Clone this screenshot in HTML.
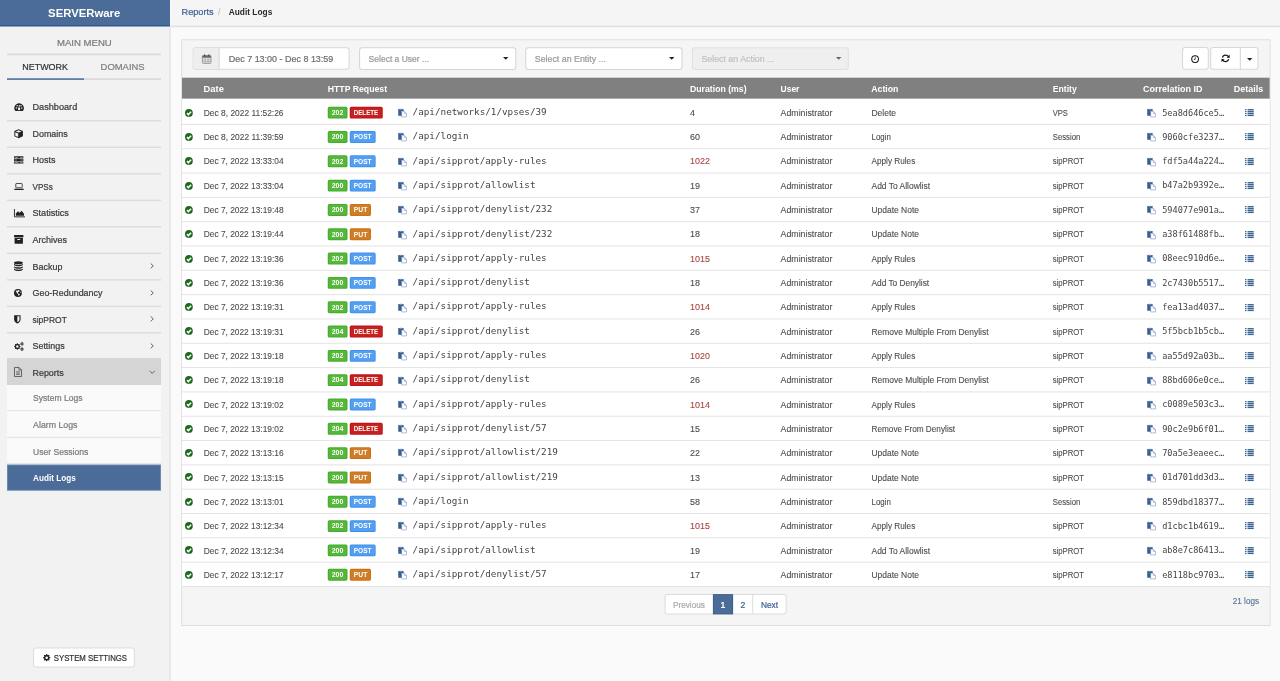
<!DOCTYPE html>
<html lang="en"><head><meta charset="utf-8"><title>SERVERware - Audit Logs</title>
<style>
*{box-sizing:border-box;margin:0;padding:0}
html,body{width:1280px;height:681px;overflow:hidden}
body{background:#fafafa;font-family:"Liberation Sans",sans-serif;position:relative}
.b{position:absolute;display:block;overflow:visible}
#all{position:absolute;left:0;top:0;width:1280px;height:681px;will-change:transform}
.t{position:absolute;display:block;white-space:nowrap;line-height:14px;height:14px;transform-origin:0 50%;-webkit-text-stroke:0.22px currentColor}
.mu,.mk,.bg,.sb,.mb,.br{-webkit-text-stroke:0}
.c{-webkit-text-stroke:0.1px currentColor}
.m{font-size:9.29px}
.mb{font-size:9.29px;font-weight:bold}
.s{font-size:9.29px}
.sb{font-size:9.29px;font-weight:bold}
.c{font-size:8.57px}
.br{font-size:11.8px;font-weight:bold}
.sy{font-size:8.93px}
.bg{font-size:6.6px;font-weight:bold}
.mu{font-family:"DejaVu Sans Mono","Liberation Mono",monospace;font-size:9.29px;color:#444}
.mk{font-family:"DejaVu Sans Mono","Liberation Mono",monospace;font-size:8.57px;color:#444}

</style></head><body><div id="all">
<svg class="b" style="left:0;top:0" width="1280" height="681" viewBox="0 0 1280 681"><rect x="0.00" y="0.00" width="170.00" height="681.00" fill="#f2f2f2"/><rect x="169.40" y="26.30" width="1.40" height="654.70" fill="#e3e3e3"/><rect x="0.00" y="0.00" width="170.00" height="26.30" fill="#4b6c98"/><rect x="0.00" y="25.00" width="170.00" height="1.30" fill="#2c568f"/><rect x="7.00" y="53.50" width="154.00" height="1.80" fill="#dadada"/><rect x="7.00" y="78.20" width="154.00" height="1.80" fill="#dadada"/><rect x="7.00" y="78.20" width="77.00" height="1.80" fill="#5f7fa8"/><rect x="7.00" y="120.11" width="154.00" height="1.40" fill="#dbdbdb"/><rect x="7.00" y="146.62" width="154.00" height="1.40" fill="#dbdbdb"/><rect x="7.00" y="173.13" width="154.00" height="1.40" fill="#dbdbdb"/><rect x="7.00" y="199.64" width="154.00" height="1.40" fill="#dbdbdb"/><rect x="7.00" y="226.15" width="154.00" height="1.40" fill="#dbdbdb"/><rect x="7.00" y="252.66" width="154.00" height="1.40" fill="#dbdbdb"/><rect x="7.00" y="279.17" width="154.00" height="1.40" fill="#dbdbdb"/><rect x="7.00" y="305.68" width="154.00" height="1.40" fill="#dbdbdb"/><rect x="7.00" y="332.19" width="154.00" height="1.40" fill="#dbdbdb"/><rect x="7.00" y="358.70" width="154.00" height="1.40" fill="#dbdbdb"/><rect x="7.00" y="358.20" width="154.00" height="27.00" fill="#d5d5d5"/><rect x="7.00" y="385.00" width="154.00" height="26.40" fill="#fafafa"/><rect x="7.00" y="410.00" width="154.00" height="1.40" fill="#e6e6e6"/><rect x="7.00" y="411.40" width="154.00" height="26.70" fill="#fafafa"/><rect x="7.00" y="436.70" width="154.00" height="1.40" fill="#e6e6e6"/><rect x="7.00" y="438.10" width="154.00" height="26.30" fill="#fafafa"/><rect x="7.00" y="463.00" width="154.00" height="1.40" fill="#e6e6e6"/><path d="M7.00 464.40H161.00A0.00 0.00 0 0 1 161.00 464.40V490.70A0.00 0.00 0 0 1 161.00 490.70H7.00A0.00 0.00 0 0 1 7.00 490.70V464.40A0.00 0.00 0 0 1 7.00 464.40Z" fill="#6c89ae"/><path d="M8.00 465.40H160.00A0.00 0.00 0 0 1 160.00 465.40V489.70A0.00 0.00 0 0 1 160.00 489.70H8.00A0.00 0.00 0 0 1 8.00 489.70V465.40A0.00 0.00 0 0 1 8.00 465.40Z" fill="#4b6c98"/><path d="M35.60 647.50H132.30A2.50 2.50 0 0 1 134.80 650.00V665.00A2.50 2.50 0 0 1 132.30 667.50H35.60A2.50 2.50 0 0 1 33.10 665.00V650.00A2.50 2.50 0 0 1 35.60 647.50Z" fill="#dcdcdc"/><path d="M35.60 648.50H132.30A1.50 1.50 0 0 1 133.80 650.00V665.00A1.50 1.50 0 0 1 132.30 666.50H35.60A1.50 1.50 0 0 1 34.10 665.00V650.00A1.50 1.50 0 0 1 35.60 648.50Z" fill="#fff"/><rect x="171.00" y="0.00" width="1109.00" height="26.70" fill="#f5f5f5"/><rect x="171.00" y="25.70" width="1109.00" height="1.00" fill="#d9d9d9"/><rect x="171.00" y="26.70" width="1109.00" height="1.30" fill="rgba(0,0,0,.02)"/><path d="M181.20 39.20H1270.60A0.00 0.00 0 0 1 1270.60 39.20V625.90A0.00 0.00 0 0 1 1270.60 625.90H181.20A0.00 0.00 0 0 1 181.20 625.90V39.20A0.00 0.00 0 0 1 181.20 39.20Z" fill="#dfdfdf"/><path d="M182.20 40.20H1269.60A0.00 0.00 0 0 1 1269.60 40.20V624.90A0.00 0.00 0 0 1 1269.60 624.90H182.20A0.00 0.00 0 0 1 182.20 624.90V40.20A0.00 0.00 0 0 1 182.20 40.20Z" fill="#f5f5f5"/><path d="M195.70 47.20H346.60A3.00 3.00 0 0 1 349.60 50.20V66.80A3.00 3.00 0 0 1 346.60 69.80H195.70A3.00 3.00 0 0 1 192.70 66.80V50.20A3.00 3.00 0 0 1 195.70 47.20Z" fill="#d8d8d8"/><path d="M195.70 48.20H346.60A2.00 2.00 0 0 1 348.60 50.20V66.80A2.00 2.00 0 0 1 346.60 68.80H195.70A2.00 2.00 0 0 1 193.70 66.80V50.20A2.00 2.00 0 0 1 195.70 48.20Z" fill="#fff"/><path d="M196.00 48.00H219.60A0.00 0.00 0 0 1 219.60 48.00V69.00A0.00 0.00 0 0 1 219.60 69.00H196.00A2.50 2.50 0 0 1 193.50 66.50V50.50A2.50 2.50 0 0 1 196.00 48.00Z" fill="#eee"/><rect x="218.60" y="48.00" width="1.00" height="21.00" fill="#d8d8d8"/><path d="M362.10 47.20H513.30A3.00 3.00 0 0 1 516.30 50.20V66.90A3.00 3.00 0 0 1 513.30 69.90H362.10A3.00 3.00 0 0 1 359.10 66.90V50.20A3.00 3.00 0 0 1 362.10 47.20Z" fill="#d4d4d4"/><path d="M362.10 48.20H513.30A2.00 2.00 0 0 1 515.30 50.20V66.90A2.00 2.00 0 0 1 513.30 68.90H362.10A2.00 2.00 0 0 1 360.10 66.90V50.20A2.00 2.00 0 0 1 362.10 48.20Z" fill="#fff"/><path d="M528.30 47.20H679.50A3.00 3.00 0 0 1 682.50 50.20V66.90A3.00 3.00 0 0 1 679.50 69.90H528.30A3.00 3.00 0 0 1 525.30 66.90V50.20A3.00 3.00 0 0 1 528.30 47.20Z" fill="#d4d4d4"/><path d="M528.30 48.20H679.50A2.00 2.00 0 0 1 681.50 50.20V66.90A2.00 2.00 0 0 1 679.50 68.90H528.30A2.00 2.00 0 0 1 526.30 66.90V50.20A2.00 2.00 0 0 1 528.30 48.20Z" fill="#fff"/><path d="M694.90 47.20H845.80A3.00 3.00 0 0 1 848.80 50.20V66.90A3.00 3.00 0 0 1 845.80 69.90H694.90A3.00 3.00 0 0 1 691.90 66.90V50.20A3.00 3.00 0 0 1 694.90 47.20Z" fill="#dfdfdf"/><path d="M694.90 48.20H845.80A2.00 2.00 0 0 1 847.80 50.20V66.90A2.00 2.00 0 0 1 845.80 68.90H694.90A2.00 2.00 0 0 1 692.90 66.90V50.20A2.00 2.00 0 0 1 694.90 48.20Z" fill="#efefef"/><path d="M1185.10 47.00H1205.80A3.00 3.00 0 0 1 1208.80 50.00V66.70A3.00 3.00 0 0 1 1205.80 69.70H1185.10A3.00 3.00 0 0 1 1182.10 66.70V50.00A3.00 3.00 0 0 1 1185.10 47.00Z" fill="#d8d8d8"/><path d="M1185.10 48.00H1205.80A2.00 2.00 0 0 1 1207.80 50.00V66.70A2.00 2.00 0 0 1 1205.80 68.70H1185.10A2.00 2.00 0 0 1 1183.10 66.70V50.00A2.00 2.00 0 0 1 1185.10 48.00Z" fill="#fff"/><path d="M1213.20 47.00H1240.90A0.00 0.00 0 0 1 1240.90 47.00V69.70A0.00 0.00 0 0 1 1240.90 69.70H1213.20A3.00 3.00 0 0 1 1210.20 66.70V50.00A3.00 3.00 0 0 1 1213.20 47.00Z" fill="#d8d8d8"/><path d="M1213.20 48.00H1239.90A0.00 0.00 0 0 1 1239.90 48.00V68.70A0.00 0.00 0 0 1 1239.90 68.70H1213.20A2.00 2.00 0 0 1 1211.20 66.70V50.00A2.00 2.00 0 0 1 1213.20 48.00Z" fill="#fff"/><path d="M1239.90 47.00H1255.50A3.00 3.00 0 0 1 1258.50 50.00V66.70A3.00 3.00 0 0 1 1255.50 69.70H1239.90A0.00 0.00 0 0 1 1239.90 69.70V47.00A0.00 0.00 0 0 1 1239.90 47.00Z" fill="#d8d8d8"/><path d="M1240.90 48.00H1255.50A2.00 2.00 0 0 1 1257.50 50.00V66.70A2.00 2.00 0 0 1 1255.50 68.70H1240.90A0.00 0.00 0 0 1 1240.90 68.70V48.00A0.00 0.00 0 0 1 1240.90 48.00Z" fill="#fff"/><rect x="182.00" y="77.70" width="1087.60" height="21.10" fill="#808080"/><rect x="182.00" y="98.80" width="1087.60" height="487.50" fill="#fff"/><rect x="182.00" y="123.90" width="1087.60" height="1.00" fill="#e3e3e3"/><path d="M329.35 106.70H345.90A1.60 1.60 0 0 1 347.50 108.30V117.00A1.60 1.60 0 0 1 345.90 118.60H329.35A1.60 1.60 0 0 1 327.75 117.00V108.30A1.60 1.60 0 0 1 329.35 106.70Z" fill="#42ad28"/><path d="M329.35 107.70H345.90A0.60 0.60 0 0 1 346.50 108.30V117.00A0.60 0.60 0 0 1 345.90 117.60H329.35A0.60 0.60 0 0 1 328.75 117.00V108.30A0.60 0.60 0 0 1 329.35 107.70Z" fill="#57b63c"/><path d="M351.35 106.70H381.15A1.60 1.60 0 0 1 382.75 108.30V117.00A1.60 1.60 0 0 1 381.15 118.60H351.35A1.60 1.60 0 0 1 349.75 117.00V108.30A1.60 1.60 0 0 1 351.35 106.70Z" fill="#bf1219"/><path d="M351.35 107.70H381.15A0.60 0.60 0 0 1 381.75 108.30V117.00A0.60 0.60 0 0 1 381.15 117.60H351.35A0.60 0.60 0 0 1 350.75 117.00V108.30A0.60 0.60 0 0 1 351.35 107.70Z" fill="#c5211f"/><rect x="182.00" y="148.22" width="1087.60" height="1.00" fill="#e3e3e3"/><path d="M329.35 131.02H345.90A1.60 1.60 0 0 1 347.50 132.62V141.32A1.60 1.60 0 0 1 345.90 142.92H329.35A1.60 1.60 0 0 1 327.75 141.32V132.62A1.60 1.60 0 0 1 329.35 131.02Z" fill="#42ad28"/><path d="M329.35 132.02H345.90A0.60 0.60 0 0 1 346.50 132.62V141.32A0.60 0.60 0 0 1 345.90 141.92H329.35A0.60 0.60 0 0 1 328.75 141.32V132.62A0.60 0.60 0 0 1 329.35 132.02Z" fill="#57b63c"/><path d="M351.35 131.02H374.05A1.60 1.60 0 0 1 375.65 132.62V141.32A1.60 1.60 0 0 1 374.05 142.92H351.35A1.60 1.60 0 0 1 349.75 141.32V132.62A1.60 1.60 0 0 1 351.35 131.02Z" fill="#3f90ea"/><path d="M351.35 132.02H374.05A0.60 0.60 0 0 1 374.65 132.62V141.32A0.60 0.60 0 0 1 374.05 141.92H351.35A0.60 0.60 0 0 1 350.75 141.32V132.62A0.60 0.60 0 0 1 351.35 132.02Z" fill="#559ff2"/><rect x="182.00" y="172.54" width="1087.60" height="1.00" fill="#e3e3e3"/><path d="M329.35 155.34H345.90A1.60 1.60 0 0 1 347.50 156.94V165.64A1.60 1.60 0 0 1 345.90 167.24H329.35A1.60 1.60 0 0 1 327.75 165.64V156.94A1.60 1.60 0 0 1 329.35 155.34Z" fill="#42ad28"/><path d="M329.35 156.34H345.90A0.60 0.60 0 0 1 346.50 156.94V165.64A0.60 0.60 0 0 1 345.90 166.24H329.35A0.60 0.60 0 0 1 328.75 165.64V156.94A0.60 0.60 0 0 1 329.35 156.34Z" fill="#57b63c"/><path d="M351.35 155.34H374.05A1.60 1.60 0 0 1 375.65 156.94V165.64A1.60 1.60 0 0 1 374.05 167.24H351.35A1.60 1.60 0 0 1 349.75 165.64V156.94A1.60 1.60 0 0 1 351.35 155.34Z" fill="#3f90ea"/><path d="M351.35 156.34H374.05A0.60 0.60 0 0 1 374.65 156.94V165.64A0.60 0.60 0 0 1 374.05 166.24H351.35A0.60 0.60 0 0 1 350.75 165.64V156.94A0.60 0.60 0 0 1 351.35 156.34Z" fill="#559ff2"/><rect x="182.00" y="196.86" width="1087.60" height="1.00" fill="#e3e3e3"/><path d="M329.35 179.66H345.90A1.60 1.60 0 0 1 347.50 181.26V189.96A1.60 1.60 0 0 1 345.90 191.56H329.35A1.60 1.60 0 0 1 327.75 189.96V181.26A1.60 1.60 0 0 1 329.35 179.66Z" fill="#42ad28"/><path d="M329.35 180.66H345.90A0.60 0.60 0 0 1 346.50 181.26V189.96A0.60 0.60 0 0 1 345.90 190.56H329.35A0.60 0.60 0 0 1 328.75 189.96V181.26A0.60 0.60 0 0 1 329.35 180.66Z" fill="#57b63c"/><path d="M351.35 179.66H374.05A1.60 1.60 0 0 1 375.65 181.26V189.96A1.60 1.60 0 0 1 374.05 191.56H351.35A1.60 1.60 0 0 1 349.75 189.96V181.26A1.60 1.60 0 0 1 351.35 179.66Z" fill="#3f90ea"/><path d="M351.35 180.66H374.05A0.60 0.60 0 0 1 374.65 181.26V189.96A0.60 0.60 0 0 1 374.05 190.56H351.35A0.60 0.60 0 0 1 350.75 189.96V181.26A0.60 0.60 0 0 1 351.35 180.66Z" fill="#559ff2"/><rect x="182.00" y="221.18" width="1087.60" height="1.00" fill="#e3e3e3"/><path d="M329.35 203.98H345.90A1.60 1.60 0 0 1 347.50 205.58V214.28A1.60 1.60 0 0 1 345.90 215.88H329.35A1.60 1.60 0 0 1 327.75 214.28V205.58A1.60 1.60 0 0 1 329.35 203.98Z" fill="#42ad28"/><path d="M329.35 204.98H345.90A0.60 0.60 0 0 1 346.50 205.58V214.28A0.60 0.60 0 0 1 345.90 214.88H329.35A0.60 0.60 0 0 1 328.75 214.28V205.58A0.60 0.60 0 0 1 329.35 204.98Z" fill="#57b63c"/><path d="M351.35 203.98H369.40A1.60 1.60 0 0 1 371.00 205.58V214.28A1.60 1.60 0 0 1 369.40 215.88H351.35A1.60 1.60 0 0 1 349.75 214.28V205.58A1.60 1.60 0 0 1 351.35 203.98Z" fill="#c87118"/><path d="M351.35 204.98H369.40A0.60 0.60 0 0 1 370.00 205.58V214.28A0.60 0.60 0 0 1 369.40 214.88H351.35A0.60 0.60 0 0 1 350.75 214.28V205.58A0.60 0.60 0 0 1 351.35 204.98Z" fill="#cf7d26"/><rect x="182.00" y="245.50" width="1087.60" height="1.00" fill="#e3e3e3"/><path d="M329.35 228.30H345.90A1.60 1.60 0 0 1 347.50 229.90V238.60A1.60 1.60 0 0 1 345.90 240.20H329.35A1.60 1.60 0 0 1 327.75 238.60V229.90A1.60 1.60 0 0 1 329.35 228.30Z" fill="#42ad28"/><path d="M329.35 229.30H345.90A0.60 0.60 0 0 1 346.50 229.90V238.60A0.60 0.60 0 0 1 345.90 239.20H329.35A0.60 0.60 0 0 1 328.75 238.60V229.90A0.60 0.60 0 0 1 329.35 229.30Z" fill="#57b63c"/><path d="M351.35 228.30H369.40A1.60 1.60 0 0 1 371.00 229.90V238.60A1.60 1.60 0 0 1 369.40 240.20H351.35A1.60 1.60 0 0 1 349.75 238.60V229.90A1.60 1.60 0 0 1 351.35 228.30Z" fill="#c87118"/><path d="M351.35 229.30H369.40A0.60 0.60 0 0 1 370.00 229.90V238.60A0.60 0.60 0 0 1 369.40 239.20H351.35A0.60 0.60 0 0 1 350.75 238.60V229.90A0.60 0.60 0 0 1 351.35 229.30Z" fill="#cf7d26"/><rect x="182.00" y="269.82" width="1087.60" height="1.00" fill="#e3e3e3"/><path d="M329.35 252.62H345.90A1.60 1.60 0 0 1 347.50 254.22V262.92A1.60 1.60 0 0 1 345.90 264.52H329.35A1.60 1.60 0 0 1 327.75 262.92V254.22A1.60 1.60 0 0 1 329.35 252.62Z" fill="#42ad28"/><path d="M329.35 253.62H345.90A0.60 0.60 0 0 1 346.50 254.22V262.92A0.60 0.60 0 0 1 345.90 263.52H329.35A0.60 0.60 0 0 1 328.75 262.92V254.22A0.60 0.60 0 0 1 329.35 253.62Z" fill="#57b63c"/><path d="M351.35 252.62H374.05A1.60 1.60 0 0 1 375.65 254.22V262.92A1.60 1.60 0 0 1 374.05 264.52H351.35A1.60 1.60 0 0 1 349.75 262.92V254.22A1.60 1.60 0 0 1 351.35 252.62Z" fill="#3f90ea"/><path d="M351.35 253.62H374.05A0.60 0.60 0 0 1 374.65 254.22V262.92A0.60 0.60 0 0 1 374.05 263.52H351.35A0.60 0.60 0 0 1 350.75 262.92V254.22A0.60 0.60 0 0 1 351.35 253.62Z" fill="#559ff2"/><rect x="182.00" y="294.14" width="1087.60" height="1.00" fill="#e3e3e3"/><path d="M329.35 276.94H345.90A1.60 1.60 0 0 1 347.50 278.54V287.24A1.60 1.60 0 0 1 345.90 288.84H329.35A1.60 1.60 0 0 1 327.75 287.24V278.54A1.60 1.60 0 0 1 329.35 276.94Z" fill="#42ad28"/><path d="M329.35 277.94H345.90A0.60 0.60 0 0 1 346.50 278.54V287.24A0.60 0.60 0 0 1 345.90 287.84H329.35A0.60 0.60 0 0 1 328.75 287.24V278.54A0.60 0.60 0 0 1 329.35 277.94Z" fill="#57b63c"/><path d="M351.35 276.94H374.05A1.60 1.60 0 0 1 375.65 278.54V287.24A1.60 1.60 0 0 1 374.05 288.84H351.35A1.60 1.60 0 0 1 349.75 287.24V278.54A1.60 1.60 0 0 1 351.35 276.94Z" fill="#3f90ea"/><path d="M351.35 277.94H374.05A0.60 0.60 0 0 1 374.65 278.54V287.24A0.60 0.60 0 0 1 374.05 287.84H351.35A0.60 0.60 0 0 1 350.75 287.24V278.54A0.60 0.60 0 0 1 351.35 277.94Z" fill="#559ff2"/><rect x="182.00" y="318.46" width="1087.60" height="1.00" fill="#e3e3e3"/><path d="M329.35 301.26H345.90A1.60 1.60 0 0 1 347.50 302.86V311.56A1.60 1.60 0 0 1 345.90 313.16H329.35A1.60 1.60 0 0 1 327.75 311.56V302.86A1.60 1.60 0 0 1 329.35 301.26Z" fill="#42ad28"/><path d="M329.35 302.26H345.90A0.60 0.60 0 0 1 346.50 302.86V311.56A0.60 0.60 0 0 1 345.90 312.16H329.35A0.60 0.60 0 0 1 328.75 311.56V302.86A0.60 0.60 0 0 1 329.35 302.26Z" fill="#57b63c"/><path d="M351.35 301.26H374.05A1.60 1.60 0 0 1 375.65 302.86V311.56A1.60 1.60 0 0 1 374.05 313.16H351.35A1.60 1.60 0 0 1 349.75 311.56V302.86A1.60 1.60 0 0 1 351.35 301.26Z" fill="#3f90ea"/><path d="M351.35 302.26H374.05A0.60 0.60 0 0 1 374.65 302.86V311.56A0.60 0.60 0 0 1 374.05 312.16H351.35A0.60 0.60 0 0 1 350.75 311.56V302.86A0.60 0.60 0 0 1 351.35 302.26Z" fill="#559ff2"/><rect x="182.00" y="342.78" width="1087.60" height="1.00" fill="#e3e3e3"/><path d="M329.35 325.58H345.90A1.60 1.60 0 0 1 347.50 327.18V335.88A1.60 1.60 0 0 1 345.90 337.48H329.35A1.60 1.60 0 0 1 327.75 335.88V327.18A1.60 1.60 0 0 1 329.35 325.58Z" fill="#42ad28"/><path d="M329.35 326.58H345.90A0.60 0.60 0 0 1 346.50 327.18V335.88A0.60 0.60 0 0 1 345.90 336.48H329.35A0.60 0.60 0 0 1 328.75 335.88V327.18A0.60 0.60 0 0 1 329.35 326.58Z" fill="#57b63c"/><path d="M351.35 325.58H381.15A1.60 1.60 0 0 1 382.75 327.18V335.88A1.60 1.60 0 0 1 381.15 337.48H351.35A1.60 1.60 0 0 1 349.75 335.88V327.18A1.60 1.60 0 0 1 351.35 325.58Z" fill="#bf1219"/><path d="M351.35 326.58H381.15A0.60 0.60 0 0 1 381.75 327.18V335.88A0.60 0.60 0 0 1 381.15 336.48H351.35A0.60 0.60 0 0 1 350.75 335.88V327.18A0.60 0.60 0 0 1 351.35 326.58Z" fill="#c5211f"/><rect x="182.00" y="367.10" width="1087.60" height="1.00" fill="#e3e3e3"/><path d="M329.35 349.90H345.90A1.60 1.60 0 0 1 347.50 351.50V360.20A1.60 1.60 0 0 1 345.90 361.80H329.35A1.60 1.60 0 0 1 327.75 360.20V351.50A1.60 1.60 0 0 1 329.35 349.90Z" fill="#42ad28"/><path d="M329.35 350.90H345.90A0.60 0.60 0 0 1 346.50 351.50V360.20A0.60 0.60 0 0 1 345.90 360.80H329.35A0.60 0.60 0 0 1 328.75 360.20V351.50A0.60 0.60 0 0 1 329.35 350.90Z" fill="#57b63c"/><path d="M351.35 349.90H374.05A1.60 1.60 0 0 1 375.65 351.50V360.20A1.60 1.60 0 0 1 374.05 361.80H351.35A1.60 1.60 0 0 1 349.75 360.20V351.50A1.60 1.60 0 0 1 351.35 349.90Z" fill="#3f90ea"/><path d="M351.35 350.90H374.05A0.60 0.60 0 0 1 374.65 351.50V360.20A0.60 0.60 0 0 1 374.05 360.80H351.35A0.60 0.60 0 0 1 350.75 360.20V351.50A0.60 0.60 0 0 1 351.35 350.90Z" fill="#559ff2"/><rect x="182.00" y="391.42" width="1087.60" height="1.00" fill="#e3e3e3"/><path d="M329.35 374.22H345.90A1.60 1.60 0 0 1 347.50 375.82V384.52A1.60 1.60 0 0 1 345.90 386.12H329.35A1.60 1.60 0 0 1 327.75 384.52V375.82A1.60 1.60 0 0 1 329.35 374.22Z" fill="#42ad28"/><path d="M329.35 375.22H345.90A0.60 0.60 0 0 1 346.50 375.82V384.52A0.60 0.60 0 0 1 345.90 385.12H329.35A0.60 0.60 0 0 1 328.75 384.52V375.82A0.60 0.60 0 0 1 329.35 375.22Z" fill="#57b63c"/><path d="M351.35 374.22H381.15A1.60 1.60 0 0 1 382.75 375.82V384.52A1.60 1.60 0 0 1 381.15 386.12H351.35A1.60 1.60 0 0 1 349.75 384.52V375.82A1.60 1.60 0 0 1 351.35 374.22Z" fill="#bf1219"/><path d="M351.35 375.22H381.15A0.60 0.60 0 0 1 381.75 375.82V384.52A0.60 0.60 0 0 1 381.15 385.12H351.35A0.60 0.60 0 0 1 350.75 384.52V375.82A0.60 0.60 0 0 1 351.35 375.22Z" fill="#c5211f"/><rect x="182.00" y="415.74" width="1087.60" height="1.00" fill="#e3e3e3"/><path d="M329.35 398.54H345.90A1.60 1.60 0 0 1 347.50 400.14V408.84A1.60 1.60 0 0 1 345.90 410.44H329.35A1.60 1.60 0 0 1 327.75 408.84V400.14A1.60 1.60 0 0 1 329.35 398.54Z" fill="#42ad28"/><path d="M329.35 399.54H345.90A0.60 0.60 0 0 1 346.50 400.14V408.84A0.60 0.60 0 0 1 345.90 409.44H329.35A0.60 0.60 0 0 1 328.75 408.84V400.14A0.60 0.60 0 0 1 329.35 399.54Z" fill="#57b63c"/><path d="M351.35 398.54H374.05A1.60 1.60 0 0 1 375.65 400.14V408.84A1.60 1.60 0 0 1 374.05 410.44H351.35A1.60 1.60 0 0 1 349.75 408.84V400.14A1.60 1.60 0 0 1 351.35 398.54Z" fill="#3f90ea"/><path d="M351.35 399.54H374.05A0.60 0.60 0 0 1 374.65 400.14V408.84A0.60 0.60 0 0 1 374.05 409.44H351.35A0.60 0.60 0 0 1 350.75 408.84V400.14A0.60 0.60 0 0 1 351.35 399.54Z" fill="#559ff2"/><rect x="182.00" y="440.06" width="1087.60" height="1.00" fill="#e3e3e3"/><path d="M329.35 422.86H345.90A1.60 1.60 0 0 1 347.50 424.46V433.16A1.60 1.60 0 0 1 345.90 434.76H329.35A1.60 1.60 0 0 1 327.75 433.16V424.46A1.60 1.60 0 0 1 329.35 422.86Z" fill="#42ad28"/><path d="M329.35 423.86H345.90A0.60 0.60 0 0 1 346.50 424.46V433.16A0.60 0.60 0 0 1 345.90 433.76H329.35A0.60 0.60 0 0 1 328.75 433.16V424.46A0.60 0.60 0 0 1 329.35 423.86Z" fill="#57b63c"/><path d="M351.35 422.86H381.15A1.60 1.60 0 0 1 382.75 424.46V433.16A1.60 1.60 0 0 1 381.15 434.76H351.35A1.60 1.60 0 0 1 349.75 433.16V424.46A1.60 1.60 0 0 1 351.35 422.86Z" fill="#bf1219"/><path d="M351.35 423.86H381.15A0.60 0.60 0 0 1 381.75 424.46V433.16A0.60 0.60 0 0 1 381.15 433.76H351.35A0.60 0.60 0 0 1 350.75 433.16V424.46A0.60 0.60 0 0 1 351.35 423.86Z" fill="#c5211f"/><rect x="182.00" y="464.38" width="1087.60" height="1.00" fill="#e3e3e3"/><path d="M329.35 447.18H345.90A1.60 1.60 0 0 1 347.50 448.78V457.48A1.60 1.60 0 0 1 345.90 459.08H329.35A1.60 1.60 0 0 1 327.75 457.48V448.78A1.60 1.60 0 0 1 329.35 447.18Z" fill="#42ad28"/><path d="M329.35 448.18H345.90A0.60 0.60 0 0 1 346.50 448.78V457.48A0.60 0.60 0 0 1 345.90 458.08H329.35A0.60 0.60 0 0 1 328.75 457.48V448.78A0.60 0.60 0 0 1 329.35 448.18Z" fill="#57b63c"/><path d="M351.35 447.18H369.40A1.60 1.60 0 0 1 371.00 448.78V457.48A1.60 1.60 0 0 1 369.40 459.08H351.35A1.60 1.60 0 0 1 349.75 457.48V448.78A1.60 1.60 0 0 1 351.35 447.18Z" fill="#c87118"/><path d="M351.35 448.18H369.40A0.60 0.60 0 0 1 370.00 448.78V457.48A0.60 0.60 0 0 1 369.40 458.08H351.35A0.60 0.60 0 0 1 350.75 457.48V448.78A0.60 0.60 0 0 1 351.35 448.18Z" fill="#cf7d26"/><rect x="182.00" y="488.70" width="1087.60" height="1.00" fill="#e3e3e3"/><path d="M329.35 471.50H345.90A1.60 1.60 0 0 1 347.50 473.10V481.80A1.60 1.60 0 0 1 345.90 483.40H329.35A1.60 1.60 0 0 1 327.75 481.80V473.10A1.60 1.60 0 0 1 329.35 471.50Z" fill="#42ad28"/><path d="M329.35 472.50H345.90A0.60 0.60 0 0 1 346.50 473.10V481.80A0.60 0.60 0 0 1 345.90 482.40H329.35A0.60 0.60 0 0 1 328.75 481.80V473.10A0.60 0.60 0 0 1 329.35 472.50Z" fill="#57b63c"/><path d="M351.35 471.50H369.40A1.60 1.60 0 0 1 371.00 473.10V481.80A1.60 1.60 0 0 1 369.40 483.40H351.35A1.60 1.60 0 0 1 349.75 481.80V473.10A1.60 1.60 0 0 1 351.35 471.50Z" fill="#c87118"/><path d="M351.35 472.50H369.40A0.60 0.60 0 0 1 370.00 473.10V481.80A0.60 0.60 0 0 1 369.40 482.40H351.35A0.60 0.60 0 0 1 350.75 481.80V473.10A0.60 0.60 0 0 1 351.35 472.50Z" fill="#cf7d26"/><rect x="182.00" y="513.02" width="1087.60" height="1.00" fill="#e3e3e3"/><path d="M329.35 495.82H345.90A1.60 1.60 0 0 1 347.50 497.42V506.12A1.60 1.60 0 0 1 345.90 507.72H329.35A1.60 1.60 0 0 1 327.75 506.12V497.42A1.60 1.60 0 0 1 329.35 495.82Z" fill="#42ad28"/><path d="M329.35 496.82H345.90A0.60 0.60 0 0 1 346.50 497.42V506.12A0.60 0.60 0 0 1 345.90 506.72H329.35A0.60 0.60 0 0 1 328.75 506.12V497.42A0.60 0.60 0 0 1 329.35 496.82Z" fill="#57b63c"/><path d="M351.35 495.82H374.05A1.60 1.60 0 0 1 375.65 497.42V506.12A1.60 1.60 0 0 1 374.05 507.72H351.35A1.60 1.60 0 0 1 349.75 506.12V497.42A1.60 1.60 0 0 1 351.35 495.82Z" fill="#3f90ea"/><path d="M351.35 496.82H374.05A0.60 0.60 0 0 1 374.65 497.42V506.12A0.60 0.60 0 0 1 374.05 506.72H351.35A0.60 0.60 0 0 1 350.75 506.12V497.42A0.60 0.60 0 0 1 351.35 496.82Z" fill="#559ff2"/><rect x="182.00" y="537.34" width="1087.60" height="1.00" fill="#e3e3e3"/><path d="M329.35 520.14H345.90A1.60 1.60 0 0 1 347.50 521.74V530.44A1.60 1.60 0 0 1 345.90 532.04H329.35A1.60 1.60 0 0 1 327.75 530.44V521.74A1.60 1.60 0 0 1 329.35 520.14Z" fill="#42ad28"/><path d="M329.35 521.14H345.90A0.60 0.60 0 0 1 346.50 521.74V530.44A0.60 0.60 0 0 1 345.90 531.04H329.35A0.60 0.60 0 0 1 328.75 530.44V521.74A0.60 0.60 0 0 1 329.35 521.14Z" fill="#57b63c"/><path d="M351.35 520.14H374.05A1.60 1.60 0 0 1 375.65 521.74V530.44A1.60 1.60 0 0 1 374.05 532.04H351.35A1.60 1.60 0 0 1 349.75 530.44V521.74A1.60 1.60 0 0 1 351.35 520.14Z" fill="#3f90ea"/><path d="M351.35 521.14H374.05A0.60 0.60 0 0 1 374.65 521.74V530.44A0.60 0.60 0 0 1 374.05 531.04H351.35A0.60 0.60 0 0 1 350.75 530.44V521.74A0.60 0.60 0 0 1 351.35 521.14Z" fill="#559ff2"/><rect x="182.00" y="561.66" width="1087.60" height="1.00" fill="#e3e3e3"/><path d="M329.35 544.46H345.90A1.60 1.60 0 0 1 347.50 546.06V554.76A1.60 1.60 0 0 1 345.90 556.36H329.35A1.60 1.60 0 0 1 327.75 554.76V546.06A1.60 1.60 0 0 1 329.35 544.46Z" fill="#42ad28"/><path d="M329.35 545.46H345.90A0.60 0.60 0 0 1 346.50 546.06V554.76A0.60 0.60 0 0 1 345.90 555.36H329.35A0.60 0.60 0 0 1 328.75 554.76V546.06A0.60 0.60 0 0 1 329.35 545.46Z" fill="#57b63c"/><path d="M351.35 544.46H374.05A1.60 1.60 0 0 1 375.65 546.06V554.76A1.60 1.60 0 0 1 374.05 556.36H351.35A1.60 1.60 0 0 1 349.75 554.76V546.06A1.60 1.60 0 0 1 351.35 544.46Z" fill="#3f90ea"/><path d="M351.35 545.46H374.05A0.60 0.60 0 0 1 374.65 546.06V554.76A0.60 0.60 0 0 1 374.05 555.36H351.35A0.60 0.60 0 0 1 350.75 554.76V546.06A0.60 0.60 0 0 1 351.35 545.46Z" fill="#559ff2"/><rect x="182.00" y="585.98" width="1087.60" height="1.00" fill="#e3e3e3"/><path d="M329.35 568.78H345.90A1.60 1.60 0 0 1 347.50 570.38V579.08A1.60 1.60 0 0 1 345.90 580.68H329.35A1.60 1.60 0 0 1 327.75 579.08V570.38A1.60 1.60 0 0 1 329.35 568.78Z" fill="#42ad28"/><path d="M329.35 569.78H345.90A0.60 0.60 0 0 1 346.50 570.38V579.08A0.60 0.60 0 0 1 345.90 579.68H329.35A0.60 0.60 0 0 1 328.75 579.08V570.38A0.60 0.60 0 0 1 329.35 569.78Z" fill="#57b63c"/><path d="M351.35 568.78H369.40A1.60 1.60 0 0 1 371.00 570.38V579.08A1.60 1.60 0 0 1 369.40 580.68H351.35A1.60 1.60 0 0 1 349.75 579.08V570.38A1.60 1.60 0 0 1 351.35 568.78Z" fill="#c87118"/><path d="M351.35 569.78H369.40A0.60 0.60 0 0 1 370.00 570.38V579.08A0.60 0.60 0 0 1 369.40 579.68H351.35A0.60 0.60 0 0 1 350.75 579.08V570.38A0.60 0.60 0 0 1 351.35 569.78Z" fill="#cf7d26"/><path d="M667.60 594.10H783.60A3.00 3.00 0 0 1 786.60 597.10V611.40A3.00 3.00 0 0 1 783.60 614.40H667.60A3.00 3.00 0 0 1 664.60 611.40V597.10A3.00 3.00 0 0 1 667.60 594.10Z" fill="#dcdcdc"/><path d="M667.60 595.10H783.60A2.00 2.00 0 0 1 785.60 597.10V611.40A2.00 2.00 0 0 1 783.60 613.40H667.60A2.00 2.00 0 0 1 665.60 611.40V597.10A2.00 2.00 0 0 1 667.60 595.10Z" fill="#fff"/><path d="M712.90 594.10H733.10A0.00 0.00 0 0 1 733.10 594.10V614.40A0.00 0.00 0 0 1 733.10 614.40H712.90A0.00 0.00 0 0 1 712.90 614.40V594.10A0.00 0.00 0 0 1 712.90 594.10Z" fill="#3f5f8a"/><path d="M713.90 595.10H732.10A0.00 0.00 0 0 1 732.10 595.10V613.40A0.00 0.00 0 0 1 732.10 613.40H713.90A0.00 0.00 0 0 1 713.90 613.40V595.10A0.00 0.00 0 0 1 713.90 595.10Z" fill="#4b6c98"/><rect x="752.20" y="595.00" width="1.00" height="18.50" fill="#dcdcdc"/></svg>



<span class="t br" style="left:48px;top:4px;line-height:16px;height:16px;transform:translate(0.10px,0.76px) scaleX(0.9587);color:#fff;">SERVERware</span>
<span class="t s" style="left:56px;top:36px;line-height:12px;height:12px;transform:translate(0.90px,0.85px) scaleX(1.0323);color:#7c7c7c;">MAIN MENU</span>

<span class="t s" style="left:22px;top:61px;line-height:12px;height:12px;transform:translate(0.25px,0.10px) scaleX(0.9638);color:#333;">NETWORK</span>
<span class="t s" style="left:100px;top:61px;line-height:12px;height:12px;transform:translate(0.60px,0.10px) scaleX(1.0157);color:#808080;">DOMAINS</span>



<svg class="b" style="left:13.90px;top:103.35px;" width="10.20" height="8.50" viewBox="0 0 18 15"><path d="M9 0.5a8.5 8.500 0 0 0-7.400 12.700c.3.600.8.800 1.400.800h12c.600 0 1.100-.2 1.400-.8A8.500 8.500 0 0 0 9 0.500z" fill="#222"/><circle cx="4.200" cy="9" r="1.300" fill="#f2f2f2"/><circle cx="5.600" cy="5" r="1.300" fill="#f2f2f2"/><circle cx="13.800" cy="9" r="1.300" fill="#f2f2f2"/><circle cx="12.400" cy="5" r="1.300" fill="#f2f2f2"/><path d="M9.700 3.500L8.600 9" stroke="#f2f2f2" stroke-width="1.500"/><circle cx="9" cy="10.500" r="2.100" fill="#f2f2f2"/></svg>
<span class="t m" style="left:32px;top:101px;line-height:12px;height:12px;transform:translate(0.50px,0.45px) scaleX(0.9858);color:#3a3a3a;">Dashboard</span>

<svg class="b" style="left:14.30px;top:129.01px;" width="9.30" height="9.50" viewBox="0 0 16 16.4"><path d="M8 0.400L15.400 3.400v9.200L8 16 0.600 12.600V3.400z" fill="#222"/><path d="M8 2.200L12.800 4.200 8 6.200 3.200 4.200z" fill="#f2f2f2"/><path d="M2.200 5.600L7.200 7.800v6.200L2.200 11.700z" fill="#f2f2f2"/></svg>
<span class="t m" style="left:32px;top:127px;line-height:12px;height:12px;transform:translate(0.50px,0.96px) scaleX(0.9599);color:#3a3a3a;">Domains</span>

<svg class="b" style="left:14.30px;top:156.37px;" width="9.40" height="7.80" viewBox="0 0 18 15"><rect x="0" y="0.6" width="18" height="4" rx="0.600" fill="#222"/><rect x="1.600" y="1.9" width="6" height="1.400" fill="#b5b5b5"/><rect x="12" y="1.9" width="4.500" height="1.400" fill="#b5b5b5"/><rect x="0" y="5.6" width="18" height="4" rx="0.600" fill="#222"/><rect x="1.600" y="6.9" width="4" height="1.400" fill="#b5b5b5"/><rect x="12" y="6.9" width="4.500" height="1.400" fill="#b5b5b5"/><rect x="0" y="10.6" width="18" height="4" rx="0.600" fill="#222"/><rect x="1.600" y="11.9" width="7" height="1.400" fill="#b5b5b5"/><rect x="12" y="11.9" width="4.500" height="1.400" fill="#b5b5b5"/></svg>
<span class="t m" style="left:32px;top:154px;line-height:12px;height:12px;transform:translate(0.50px,0.47px) scaleX(0.9675);color:#3a3a3a;">Hosts</span>

<svg class="b" style="left:14.00px;top:183.18px;" width="10.00" height="7.40" viewBox="0 0 20 14.800"><rect x="3.600" y="1" width="12.800" height="8.600" rx="1" fill="none" stroke="#222" stroke-width="1.600"/><path d="M0 11.400h20v0.800c0 1-.8 1.600-1.600 1.600H1.600C.800 13.800 0 13.200 0 12.200z" fill="#222"/></svg>
<span class="t m" style="left:32px;top:180px;line-height:12px;height:12px;transform:translate(0.50px,0.98px) scaleX(0.8697);color:#3a3a3a;">VPSs</span>

<svg class="b" style="left:13.90px;top:208.99px;" width="11.00" height="8.40" viewBox="0 0 20.400 15.600"><path d="M0.800 0v14.600h19.600" fill="none" stroke="#222" stroke-width="1.700"/><path d="M3.400 12.600V8.200L7.400 4.200 10.600 7 14 3.400 18.600 9v3.600z" fill="#222"/></svg>
<span class="t m" style="left:32px;top:207px;line-height:12px;height:12px;transform:translate(0.50px,0.49px) scaleX(0.9788);color:#3a3a3a;">Statistics</span>

<svg class="b" style="left:14.00px;top:235.30px;" width="9.50" height="8.70" viewBox="0 0 16.400 15.200"><rect x="0" y="0" width="16.400" height="4" rx="0.500" fill="#222"/><path d="M0.900 5h14.600v9.400c0 .5-.3.800-.8.800H1.700c-.5 0-.8-.3-.8-.8z" fill="#222"/><rect x="5.600" y="6.800" width="5.200" height="1.800" rx="0.900" fill="#f2f2f2"/></svg>
<span class="t m" style="left:32px;top:233px;line-height:12px;height:12px;transform:translate(0.50px,1.00px) scaleX(0.9681);color:#3a3a3a;">Archives</span>

<svg class="b" style="left:14.00px;top:260.91px;" width="8.80" height="10.60" viewBox="0 0 16 18.400"><ellipse cx="8" cy="2.800" rx="8" ry="2.800" fill="#222"/><path d="M0 4.6c1.400 1.500 4.500 2.100 8 2.100s6.600-.6 8-2.100v2.400c-1.400 1.600-4.500 2.200-8 2.200s-6.600-.6-8-2.200z" fill="#222"/><path d="M0 8.9c1.400 1.500 4.500 2.100 8 2.100s6.600-.6 8-2.100v2.400c-1.400 1.600-4.500 2.200-8 2.200s-6.600-.6-8-2.200z" fill="#222"/><path d="M0 13.2c1.400 1.500 4.500 2.100 8 2.100s6.600-.6 8-2.100v2.400c-1.400 1.600-4.500 2.200-8 2.200s-6.600-.6-8-2.200z" fill="#222"/></svg>
<span class="t m" style="left:32px;top:260px;line-height:12px;height:12px;transform:translate(0.50px,0.51px) scaleX(0.9644);color:#3a3a3a;">Backup</span>
<svg class="b" style="left:150.20px;top:263.41px;" width="4.20" height="5.80" viewBox="0 0 4.2 5.8"><path d="M0.7 0.5L3.3 2.9 0.7 5.3" fill="none" stroke="#555" stroke-width="0.9"/></svg>

<svg class="b" style="left:14.45px;top:288.92px;" width="7.90" height="7.90" viewBox="0 0 16 16"><circle cx="8" cy="8" r="8" fill="#222"/><path d="M4.400 2.800l2.800.8 1.600-1.400 2.600.8-.4 2.200-2.400.8-1 2 1.600 1.600 2.800.4-1.400 3.400-2-.4-.6-2.800-2.200-1.600-.800-2.800-1.800-.6z" fill="#f2f2f2"/><path d="M12.600 4.600l2 1.800.2 2.400-1.600-1.400z" fill="#f2f2f2"/></svg>
<span class="t m" style="left:32px;top:287px;line-height:12px;height:12px;transform:translate(0.50px,0.02px) scaleX(0.9616);color:#3a3a3a;">Geo-Redundancy</span>
<svg class="b" style="left:150.20px;top:289.92px;" width="4.20" height="5.80" viewBox="0 0 4.2 5.8"><path d="M0.7 0.5L3.3 2.9 0.7 5.3" fill="none" stroke="#555" stroke-width="0.9"/></svg>

<svg class="b" style="left:14.40px;top:315.13px;" width="6.70" height="8.80" viewBox="0 0 12.400 16.400"><path d="M0.200 0.400h12v8c0 4-3.400 6.400-6 7.600-2.600-1.200-6-3.600-6-7.600z" fill="#222"/><path d="M6.200 2.400h4v5.800c0 2.400-2 4.200-4 5.400z" fill="#f2f2f2"/></svg>
<span class="t m" style="left:32px;top:313px;line-height:12px;height:12px;transform:translate(0.50px,0.53px) scaleX(0.9111);color:#3a3a3a;">sipPROT</span>
<svg class="b" style="left:150.20px;top:316.43px;" width="4.20" height="5.80" viewBox="0 0 4.2 5.8"><path d="M0.7 0.5L3.3 2.9 0.7 5.3" fill="none" stroke="#555" stroke-width="0.9"/></svg>

<svg class="b" style="left:14.00px;top:341.54px;" width="10.20" height="9.00" viewBox="0 0 19.600 17.200"><path d="M12.57 7.99L12.57 9.21L10.99 9.99L10.63 10.86L11.19 12.53L10.33 13.39L8.66 12.83L7.79 13.19L7.01 14.77L5.79 14.77L5.01 13.19L4.14 12.83L2.47 13.39L1.61 12.53L2.17 10.86L1.81 9.99L0.23 9.21L0.23 7.99L1.81 7.21L2.17 6.34L1.61 4.67L2.47 3.81L4.14 4.37L5.01 4.01L5.79 2.43L7.01 2.43L7.79 4.01L8.66 4.37L10.33 3.81L11.19 4.67L10.63 6.34L10.99 7.21z" fill="#222"/><circle cx="6.40" cy="8.60" r="2.30" fill="#f2f2f2"/><path d="M18.87 3.14L18.87 4.06L17.80 4.59L17.46 5.18L17.53 6.38L16.74 6.83L15.74 6.18L15.06 6.18L14.06 6.83L13.27 6.38L13.34 5.18L13.00 4.59L11.93 4.06L11.93 3.14L13.00 2.61L13.34 2.02L13.27 0.82L14.06 0.37L15.06 1.02L15.74 1.02L16.74 0.37L17.53 0.82L17.46 2.02L17.80 2.61z" fill="#222"/><circle cx="15.40" cy="3.60" r="1.20" fill="#f2f2f2"/><path d="M18.87 13.14L18.87 14.06L17.80 14.59L17.46 15.18L17.53 16.38L16.74 16.83L15.74 16.18L15.06 16.18L14.06 16.83L13.27 16.38L13.34 15.18L13.00 14.59L11.93 14.06L11.93 13.14L13.00 12.61L13.34 12.02L13.27 10.82L14.06 10.37L15.06 11.02L15.74 11.02L16.74 10.37L17.53 10.82L17.46 12.02L17.80 12.61z" fill="#222"/><circle cx="15.40" cy="13.60" r="1.20" fill="#f2f2f2"/></svg>
<span class="t m" style="left:32px;top:340px;line-height:12px;height:12px;transform:translate(0.50px,0.04px) scaleX(0.9588);color:#3a3a3a;">Settings</span>
<svg class="b" style="left:150.20px;top:342.94px;" width="4.20" height="5.80" viewBox="0 0 4.2 5.8"><path d="M0.7 0.5L3.3 2.9 0.7 5.3" fill="none" stroke="#555" stroke-width="0.9"/></svg>

<svg class="b" style="left:14.30px;top:367.35px;" width="8.00" height="10.00" viewBox="0 0 14 17.600"><path d="M0.800 0.800h8l4.400 4.400v11.600H0.800z" fill="none" stroke="#444" stroke-width="1.400"/><path d="M8.600 1v4.400h4.400" fill="none" stroke="#444" stroke-width="1.200"/><path d="M3.600 8.400h6.800M3.600 10.800h6.800M3.600 13.200h6.800" stroke="#444" stroke-width="1.100"/></svg>
<span class="t m" style="left:32px;top:366px;line-height:12px;height:12px;transform:translate(0.50px,0.55px) scaleX(0.9617);color:#3a3a3a;">Reports</span>
<svg class="b" style="left:149.00px;top:370.15px;" width="6.40" height="4.40" viewBox="0 0 6.4 4.4"><path d="M0.6 0.8L3.2 3.4 5.8 0.8" fill="none" stroke="#555" stroke-width="0.9"/></svg>

<span class="t m" style="left:33px;top:392px;line-height:12px;height:12px;transform:translate(0.10px,0.40px) scaleX(0.9221);color:#7a7a7a;">System Logs</span>

<span class="t m" style="left:33px;top:418px;line-height:12px;height:12px;transform:translate(0.10px,0.80px) scaleX(0.9450);color:#7a7a7a;">Alarm Logs</span>

<span class="t m" style="left:33px;top:445px;line-height:12px;height:12px;transform:translate(0.10px,0.60px) scaleX(0.9204);color:#7a7a7a;">User Sessions</span>

<span class="t mb" style="left:33px;top:472px;line-height:12px;height:12px;transform:translate(0.10px,0.30px) scaleX(0.8800);color:#fff;">Audit Logs</span>

<svg class="b" style="left:42.55px;top:654.10px;" width="7.40" height="7.40" viewBox="0 0 16 16"><path d="M15.96 7.22L15.96 8.78L13.74 9.74L13.29 10.83L14.18 13.08L13.08 14.18L10.83 13.29L9.74 13.74L8.78 15.96L7.22 15.96L6.26 13.74L5.17 13.29L2.92 14.18L1.82 13.08L2.71 10.83L2.26 9.74L0.04 8.78L0.04 7.22L2.26 6.26L2.71 5.17L1.82 2.92L2.92 1.82L5.17 2.71L6.26 2.26L7.22 0.04L8.78 0.04L9.74 2.26L10.83 2.71L13.08 1.82L14.18 2.92L13.29 5.17L13.74 6.26z" fill="#222"/><circle cx="8" cy="8" r="2.800" fill="#fff"/></svg>
<span class="t sy" style="left:53px;top:651px;line-height:12px;height:12px;transform:translate(0.75px,0.87px) scaleX(0.8750);color:#333;">SYSTEM SETTINGS</span>


<span class="t s" style="left:181px;top:6px;line-height:12px;height:12px;transform:translate(0.50px,0.20px) scaleX(0.9891);color:#3d6294;">Reports</span>
<span class="t s" style="left:218px;top:6px;line-height:12px;height:12px;transform:translate(0.00px,0.20px) scaleX(0.9300);color:#c4c4c4;">/</span>
<span class="t sb" style="left:228px;top:6px;line-height:12px;height:12px;transform:translate(0.75px,0.20px) scaleX(0.8986);color:#2a2a2a;">Audit Logs</span>



<svg class="b" style="left:201.55px;top:54.00px;" width="9.40" height="9.80" viewBox="0 0 18.800 19.600"><rect x="0.800" y="3" width="17.200" height="15.800" rx="1.600" fill="#e4e4e4" stroke="#777" stroke-width="1.300"/><path d="M0.800 4.600c0-1 .6-1.600 1.600-1.600h14c1 0 1.600.6 1.600 1.600v3H0.800z" fill="#6a6a6a"/><path d="M1 11.600h17M1 15.200h17M6.400 8v10.600M12.200 8v10.600" stroke="#8c8c8c" stroke-width="0.900"/><rect x="4" y="0.400" width="2.400" height="4.800" rx="1.200" fill="#555"/><rect x="12.400" y="0.400" width="2.400" height="4.800" rx="1.200" fill="#555"/></svg>
<span class="t s" style="left:228px;top:52px;line-height:12px;height:12px;transform:translate(0.75px,0.80px) scaleX(0.9650);color:#6e6e6e;">Dec 7 13:00 - Dec 8 13:59</span>

<span class="t s" style="left:368px;top:52px;line-height:12px;height:12px;transform:translate(0.60px,0.80px) scaleX(0.9168);color:#999;">Select a User ...</span>
<svg class="b" style="left:503.20px;top:57.45px;" width="5.40" height="2.80" viewBox="0 0 5.4 2.8"><path d="M0 0h5.4L2.7 2.8z" fill="#222"/></svg>

<span class="t s" style="left:534px;top:52px;line-height:12px;height:12px;transform:translate(0.80px,0.80px) scaleX(0.9498);color:#999;">Select an Entity ...</span>
<svg class="b" style="left:669.40px;top:57.45px;" width="5.40" height="2.80" viewBox="0 0 5.4 2.8"><path d="M0 0h5.4L2.7 2.8z" fill="#222"/></svg>

<span class="t s" style="left:701px;top:52px;line-height:12px;height:12px;transform:translate(0.40px,0.80px) scaleX(0.9504);color:#c2c2c2;">Select an Action ...</span>
<svg class="b" style="left:835.70px;top:57.45px;" width="5.40" height="2.80" viewBox="0 0 5.4 2.8"><path d="M0 0h5.4L2.7 2.8z" fill="#666"/></svg>

<svg class="b" style="left:1191.20px;top:54.65px;" width="8.20" height="8.20" viewBox="0 0 16 16"><circle cx="8" cy="8" r="6.600" fill="none" stroke="#111" stroke-width="2"/><path d="M8.600 4.400L8 8.600 5.600 9" fill="none" stroke="#111" stroke-width="1.500"/></svg>

<svg class="b" style="left:1220.90px;top:54.35px;" width="9.20" height="8.80" viewBox="0 0 18.400 17.600"><g transform="translate(18.4,0) scale(-1,1)"><path d="M15.600 7A7 7 0 0 0 3.400 5.200" fill="none" stroke="#111" stroke-width="2.500"/><path d="M2.800 10.600A7 7 0 0 0 15 12.400" fill="none" stroke="#111" stroke-width="2.500"/><path d="M0.800 1.600L1.200 8l6-1.200z" fill="#111"/><path d="M17.600 16L17.200 9.600l-6 1.200z" fill="#111"/></g></svg>

<svg class="b" style="left:1246.90px;top:57.80px;" width="5.40" height="2.80" viewBox="0 0 5.4 2.8"><path d="M0 0h5.4L2.7 2.8z" fill="#222"/></svg>


<span class="t sb" style="left:203px;top:82px;line-height:12px;height:12px;transform:translate(0.60px,0.85px) scaleX(1.0073);color:#fff;">Date</span>
<span class="t sb" style="left:327px;top:82px;line-height:12px;height:12px;transform:translate(0.75px,0.85px) scaleX(0.9378);color:#fff;">HTTP Request</span>
<span class="t sb" style="left:690px;top:82px;line-height:12px;height:12px;transform:translate(0.00px,0.85px) scaleX(0.9380);color:#fff;">Duration (ms)</span>
<span class="t sb" style="left:780px;top:82px;line-height:12px;height:12px;transform:translate(0.60px,0.85px) scaleX(0.9108);color:#fff;">User</span>
<span class="t sb" style="left:871px;top:82px;line-height:12px;height:12px;transform:translate(0.25px,0.85px) scaleX(0.9417);color:#fff;">Action</span>
<span class="t sb" style="left:1052px;top:82px;line-height:12px;height:12px;transform:translate(0.75px,0.85px) scaleX(0.9298);color:#fff;">Entity</span>
<span class="t sb" style="left:1143px;top:82px;line-height:12px;height:12px;transform:translate(0.10px,0.85px) scaleX(0.9698);color:#fff;">Correlation ID</span>
<span class="t sb" style="left:1233px;top:82px;line-height:12px;height:12px;transform:translate(0.75px,0.85px) scaleX(0.9695);color:#fff;">Details</span>

<svg class="b" style="left:185.05px;top:108.60px;" width="7.80" height="7.80" viewBox="0 0 16 16"><circle cx="8" cy="8" r="8" fill="#1c6a1c"/><path d="M4 8.500L6.900 11.400 12.600 5.600" fill="none" stroke="#fff" stroke-width="3.100"/></svg>
<span class="t c" style="left:203px;top:106px;line-height:12px;height:12px;transform:translate(0.75px,0.75px) scaleX(0.9818);color:#4c4c4c;">Dec 8, 2022 11:52:26</span>

<span class="t bg" style="left:331px;top:107px;line-height:9px;height:9px;transform:translate(0.70px,0.97px) scaleX(1.0499);color:#fff;">202</span>

<span class="t bg" style="left:353px;top:107px;line-height:9px;height:9px;transform:translate(0.75px,0.97px) scaleX(0.9394);color:#fff;">DELETE</span>
<svg class="b" style="left:397.70px;top:108.00px;" width="9.20" height="9.60" viewBox="0 0 16 16"><path d="M0.4 1.6h9.4v3.4H5.4v8H0.4z" fill="#3a5f91"/><rect x="2.6" y="0.9" width="5" height="1.6" fill="#9db1cd"/><path d="M6.4 5.6h4.8l3.6 3.4V15.2H6.4z" fill="#fff" stroke="#8aa2c4" stroke-width="1.2"/><path d="M11 5.8v3.4h3.6" fill="none" stroke="#8aa2c4" stroke-width="1.1"/><path d="M5.8 5.4v7.8" stroke="#3a5f91" stroke-width="1.2"/></svg>
<span class="t mu" style="left:412px;top:104px;line-height:13px;height:13px;transform:translate(0.60px,0.90px)">/api/networks/1/vpses/39</span>
<span class="t c" style="left:690px;top:106px;line-height:12px;height:12px;transform:translate(0.00px,0.75px) scaleX(1.0450);color:#4c4c4c;">4</span>
<span class="t c" style="left:780px;top:106px;line-height:12px;height:12px;transform:translate(0.60px,0.75px) scaleX(1.0260);color:#4c4c4c;">Administrator</span>
<span class="t c" style="left:871px;top:106px;line-height:12px;height:12px;transform:translate(0.50px,0.75px) scaleX(0.9904);color:#4c4c4c;">Delete</span>
<span class="t c" style="left:1052px;top:106px;line-height:12px;height:12px;transform:translate(0.75px,0.75px) scaleX(0.8811);color:#4c4c4c;">VPS</span>
<svg class="b" style="left:1147.30px;top:108.00px;" width="9.20" height="9.60" viewBox="0 0 16 16"><path d="M0.4 1.6h9.4v3.4H5.4v8H0.4z" fill="#3a5f91"/><rect x="2.6" y="0.9" width="5" height="1.6" fill="#9db1cd"/><path d="M6.4 5.6h4.8l3.6 3.4V15.2H6.4z" fill="#fff" stroke="#8aa2c4" stroke-width="1.2"/><path d="M11 5.8v3.4h3.6" fill="none" stroke="#8aa2c4" stroke-width="1.1"/><path d="M5.8 5.4v7.8" stroke="#3a5f91" stroke-width="1.2"/></svg>
<span class="t mk" style="left:1162px;top:106px;line-height:12px;height:12px;transform:translate(0.20px,0.50px)">5ea8d646ce5…</span>
<svg class="b" style="left:1245.30px;top:109.00px;" width="8.70" height="7.10" viewBox="0 0 8.7 7.1"><g fill="#3b6591"><rect x="0" y="0.05" width="1.5" height="1.2"/><rect x="2.6" y="0.05" width="6.1" height="1.2"/><rect x="0" y="2.00" width="1.5" height="1.2"/><rect x="2.6" y="2.00" width="6.1" height="1.2"/><rect x="0" y="3.95" width="1.5" height="1.2"/><rect x="2.6" y="3.95" width="6.1" height="1.2"/><rect x="0" y="5.90" width="1.5" height="1.2"/><rect x="2.6" y="5.90" width="6.1" height="1.2"/></g><rect x="2.6" y="0.6" width="6.1" height="6" fill="#3b6591" opacity="0.3"/></svg>

<svg class="b" style="left:185.05px;top:132.92px;" width="7.80" height="7.80" viewBox="0 0 16 16"><circle cx="8" cy="8" r="8" fill="#1c6a1c"/><path d="M4 8.500L6.900 11.400 12.600 5.600" fill="none" stroke="#fff" stroke-width="3.100"/></svg>
<span class="t c" style="left:203px;top:131px;line-height:12px;height:12px;transform:translate(0.75px,0.07px) scaleX(0.9818);color:#4c4c4c;">Dec 8, 2022 11:39:59</span>

<span class="t bg" style="left:331px;top:132px;line-height:9px;height:9px;transform:translate(0.70px,0.29px) scaleX(1.0676);color:#fff;">200</span>

<span class="t bg" style="left:353px;top:132px;line-height:9px;height:9px;transform:translate(0.75px,0.29px) scaleX(0.9902);color:#fff;">POST</span>
<svg class="b" style="left:397.70px;top:132.32px;" width="9.20" height="9.60" viewBox="0 0 16 16"><path d="M0.4 1.6h9.4v3.4H5.4v8H0.4z" fill="#3a5f91"/><rect x="2.6" y="0.9" width="5" height="1.6" fill="#9db1cd"/><path d="M6.4 5.6h4.8l3.6 3.4V15.2H6.4z" fill="#fff" stroke="#8aa2c4" stroke-width="1.2"/><path d="M11 5.8v3.4h3.6" fill="none" stroke="#8aa2c4" stroke-width="1.1"/><path d="M5.8 5.4v7.8" stroke="#3a5f91" stroke-width="1.2"/></svg>
<span class="t mu" style="left:412px;top:129px;line-height:13px;height:13px;transform:translate(0.60px,0.22px)">/api/login</span>
<span class="t c" style="left:690px;top:131px;line-height:12px;height:12px;transform:translate(0.00px,0.07px) scaleX(1.0450);color:#4c4c4c;">60</span>
<span class="t c" style="left:780px;top:131px;line-height:12px;height:12px;transform:translate(0.60px,0.07px) scaleX(1.0260);color:#4c4c4c;">Administrator</span>
<span class="t c" style="left:871px;top:131px;line-height:12px;height:12px;transform:translate(0.50px,0.07px) scaleX(0.9227);color:#4c4c4c;">Login</span>
<span class="t c" style="left:1052px;top:131px;line-height:12px;height:12px;transform:translate(0.75px,0.07px) scaleX(0.9055);color:#4c4c4c;">Session</span>
<svg class="b" style="left:1147.30px;top:132.32px;" width="9.20" height="9.60" viewBox="0 0 16 16"><path d="M0.4 1.6h9.4v3.4H5.4v8H0.4z" fill="#3a5f91"/><rect x="2.6" y="0.9" width="5" height="1.6" fill="#9db1cd"/><path d="M6.4 5.6h4.8l3.6 3.4V15.2H6.4z" fill="#fff" stroke="#8aa2c4" stroke-width="1.2"/><path d="M11 5.8v3.4h3.6" fill="none" stroke="#8aa2c4" stroke-width="1.1"/><path d="M5.8 5.4v7.8" stroke="#3a5f91" stroke-width="1.2"/></svg>
<span class="t mk" style="left:1162px;top:130px;line-height:12px;height:12px;transform:translate(0.20px,0.82px)">9060cfe3237…</span>
<svg class="b" style="left:1245.30px;top:133.32px;" width="8.70" height="7.10" viewBox="0 0 8.7 7.1"><g fill="#3b6591"><rect x="0" y="0.05" width="1.5" height="1.2"/><rect x="2.6" y="0.05" width="6.1" height="1.2"/><rect x="0" y="2.00" width="1.5" height="1.2"/><rect x="2.6" y="2.00" width="6.1" height="1.2"/><rect x="0" y="3.95" width="1.5" height="1.2"/><rect x="2.6" y="3.95" width="6.1" height="1.2"/><rect x="0" y="5.90" width="1.5" height="1.2"/><rect x="2.6" y="5.90" width="6.1" height="1.2"/></g><rect x="2.6" y="0.6" width="6.1" height="6" fill="#3b6591" opacity="0.3"/></svg>

<svg class="b" style="left:185.05px;top:157.24px;" width="7.80" height="7.80" viewBox="0 0 16 16"><circle cx="8" cy="8" r="8" fill="#1c6a1c"/><path d="M4 8.500L6.900 11.400 12.600 5.600" fill="none" stroke="#fff" stroke-width="3.100"/></svg>
<span class="t c" style="left:203px;top:155px;line-height:12px;height:12px;transform:translate(0.75px,0.39px) scaleX(0.9742);color:#4c4c4c;">Dec 7, 2022 13:33:04</span>

<span class="t bg" style="left:331px;top:156px;line-height:9px;height:9px;transform:translate(0.70px,0.61px) scaleX(1.0499);color:#fff;">202</span>

<span class="t bg" style="left:353px;top:156px;line-height:9px;height:9px;transform:translate(0.75px,0.61px) scaleX(0.9902);color:#fff;">POST</span>
<svg class="b" style="left:397.70px;top:156.64px;" width="9.20" height="9.60" viewBox="0 0 16 16"><path d="M0.4 1.6h9.4v3.4H5.4v8H0.4z" fill="#3a5f91"/><rect x="2.6" y="0.9" width="5" height="1.6" fill="#9db1cd"/><path d="M6.4 5.6h4.8l3.6 3.4V15.2H6.4z" fill="#fff" stroke="#8aa2c4" stroke-width="1.2"/><path d="M11 5.8v3.4h3.6" fill="none" stroke="#8aa2c4" stroke-width="1.1"/><path d="M5.8 5.4v7.8" stroke="#3a5f91" stroke-width="1.2"/></svg>
<span class="t mu" style="left:412px;top:153px;line-height:13px;height:13px;transform:translate(0.60px,0.54px)">/api/sipprot/apply-rules</span>
<span class="t c" style="left:690px;top:155px;line-height:12px;height:12px;transform:translate(0.00px,0.39px) scaleX(1.0450);color:#a94442;">1022</span>
<span class="t c" style="left:780px;top:155px;line-height:12px;height:12px;transform:translate(0.60px,0.39px) scaleX(1.0260);color:#4c4c4c;">Administrator</span>
<span class="t c" style="left:871px;top:155px;line-height:12px;height:12px;transform:translate(0.50px,0.39px) scaleX(0.9580);color:#4c4c4c;">Apply Rules</span>
<span class="t c" style="left:1052px;top:155px;line-height:12px;height:12px;transform:translate(0.75px,0.39px) scaleX(0.9014);color:#4c4c4c;">sipPROT</span>
<svg class="b" style="left:1147.30px;top:156.64px;" width="9.20" height="9.60" viewBox="0 0 16 16"><path d="M0.4 1.6h9.4v3.4H5.4v8H0.4z" fill="#3a5f91"/><rect x="2.6" y="0.9" width="5" height="1.6" fill="#9db1cd"/><path d="M6.4 5.6h4.8l3.6 3.4V15.2H6.4z" fill="#fff" stroke="#8aa2c4" stroke-width="1.2"/><path d="M11 5.8v3.4h3.6" fill="none" stroke="#8aa2c4" stroke-width="1.1"/><path d="M5.8 5.4v7.8" stroke="#3a5f91" stroke-width="1.2"/></svg>
<span class="t mk" style="left:1162px;top:155px;line-height:12px;height:12px;transform:translate(0.20px,0.14px)">fdf5a44a224…</span>
<svg class="b" style="left:1245.30px;top:157.64px;" width="8.70" height="7.10" viewBox="0 0 8.7 7.1"><g fill="#3b6591"><rect x="0" y="0.05" width="1.5" height="1.2"/><rect x="2.6" y="0.05" width="6.1" height="1.2"/><rect x="0" y="2.00" width="1.5" height="1.2"/><rect x="2.6" y="2.00" width="6.1" height="1.2"/><rect x="0" y="3.95" width="1.5" height="1.2"/><rect x="2.6" y="3.95" width="6.1" height="1.2"/><rect x="0" y="5.90" width="1.5" height="1.2"/><rect x="2.6" y="5.90" width="6.1" height="1.2"/></g><rect x="2.6" y="0.6" width="6.1" height="6" fill="#3b6591" opacity="0.3"/></svg>

<svg class="b" style="left:185.05px;top:181.56px;" width="7.80" height="7.80" viewBox="0 0 16 16"><circle cx="8" cy="8" r="8" fill="#1c6a1c"/><path d="M4 8.500L6.900 11.400 12.600 5.600" fill="none" stroke="#fff" stroke-width="3.100"/></svg>
<span class="t c" style="left:203px;top:179px;line-height:12px;height:12px;transform:translate(0.75px,0.71px) scaleX(0.9742);color:#4c4c4c;">Dec 7, 2022 13:33:04</span>

<span class="t bg" style="left:331px;top:180px;line-height:9px;height:9px;transform:translate(0.70px,0.93px) scaleX(1.0676);color:#fff;">200</span>

<span class="t bg" style="left:353px;top:180px;line-height:9px;height:9px;transform:translate(0.75px,0.93px) scaleX(0.9902);color:#fff;">POST</span>
<svg class="b" style="left:397.70px;top:180.96px;" width="9.20" height="9.60" viewBox="0 0 16 16"><path d="M0.4 1.6h9.4v3.4H5.4v8H0.4z" fill="#3a5f91"/><rect x="2.6" y="0.9" width="5" height="1.6" fill="#9db1cd"/><path d="M6.4 5.6h4.8l3.6 3.4V15.2H6.4z" fill="#fff" stroke="#8aa2c4" stroke-width="1.2"/><path d="M11 5.8v3.4h3.6" fill="none" stroke="#8aa2c4" stroke-width="1.1"/><path d="M5.8 5.4v7.8" stroke="#3a5f91" stroke-width="1.2"/></svg>
<span class="t mu" style="left:412px;top:177px;line-height:13px;height:13px;transform:translate(0.60px,0.86px)">/api/sipprot/allowlist</span>
<span class="t c" style="left:690px;top:179px;line-height:12px;height:12px;transform:translate(0.00px,0.71px) scaleX(1.0450);color:#4c4c4c;">19</span>
<span class="t c" style="left:780px;top:179px;line-height:12px;height:12px;transform:translate(0.60px,0.71px) scaleX(1.0260);color:#4c4c4c;">Administrator</span>
<span class="t c" style="left:871px;top:179px;line-height:12px;height:12px;transform:translate(0.50px,0.71px) scaleX(0.9871);color:#4c4c4c;">Add To Allowlist</span>
<span class="t c" style="left:1052px;top:179px;line-height:12px;height:12px;transform:translate(0.75px,0.71px) scaleX(0.9014);color:#4c4c4c;">sipPROT</span>
<svg class="b" style="left:1147.30px;top:180.96px;" width="9.20" height="9.60" viewBox="0 0 16 16"><path d="M0.4 1.6h9.4v3.4H5.4v8H0.4z" fill="#3a5f91"/><rect x="2.6" y="0.9" width="5" height="1.6" fill="#9db1cd"/><path d="M6.4 5.6h4.8l3.6 3.4V15.2H6.4z" fill="#fff" stroke="#8aa2c4" stroke-width="1.2"/><path d="M11 5.8v3.4h3.6" fill="none" stroke="#8aa2c4" stroke-width="1.1"/><path d="M5.8 5.4v7.8" stroke="#3a5f91" stroke-width="1.2"/></svg>
<span class="t mk" style="left:1162px;top:179px;line-height:12px;height:12px;transform:translate(0.20px,0.46px)">b47a2b9392e…</span>
<svg class="b" style="left:1245.30px;top:181.96px;" width="8.70" height="7.10" viewBox="0 0 8.7 7.1"><g fill="#3b6591"><rect x="0" y="0.05" width="1.5" height="1.2"/><rect x="2.6" y="0.05" width="6.1" height="1.2"/><rect x="0" y="2.00" width="1.5" height="1.2"/><rect x="2.6" y="2.00" width="6.1" height="1.2"/><rect x="0" y="3.95" width="1.5" height="1.2"/><rect x="2.6" y="3.95" width="6.1" height="1.2"/><rect x="0" y="5.90" width="1.5" height="1.2"/><rect x="2.6" y="5.90" width="6.1" height="1.2"/></g><rect x="2.6" y="0.6" width="6.1" height="6" fill="#3b6591" opacity="0.3"/></svg>

<svg class="b" style="left:185.05px;top:205.88px;" width="7.80" height="7.80" viewBox="0 0 16 16"><circle cx="8" cy="8" r="8" fill="#1c6a1c"/><path d="M4 8.500L6.900 11.400 12.600 5.600" fill="none" stroke="#fff" stroke-width="3.100"/></svg>
<span class="t c" style="left:203px;top:204px;line-height:12px;height:12px;transform:translate(0.75px,0.03px) scaleX(0.9742);color:#4c4c4c;">Dec 7, 2022 13:19:48</span>

<span class="t bg" style="left:331px;top:205px;line-height:9px;height:9px;transform:translate(0.70px,0.25px) scaleX(1.0676);color:#fff;">200</span>

<span class="t bg" style="left:353px;top:205px;line-height:9px;height:9px;transform:translate(0.75px,0.25px) scaleX(1.0259);color:#fff;">PUT</span>
<svg class="b" style="left:397.70px;top:205.28px;" width="9.20" height="9.60" viewBox="0 0 16 16"><path d="M0.4 1.6h9.4v3.4H5.4v8H0.4z" fill="#3a5f91"/><rect x="2.6" y="0.9" width="5" height="1.6" fill="#9db1cd"/><path d="M6.4 5.6h4.8l3.6 3.4V15.2H6.4z" fill="#fff" stroke="#8aa2c4" stroke-width="1.2"/><path d="M11 5.8v3.4h3.6" fill="none" stroke="#8aa2c4" stroke-width="1.1"/><path d="M5.8 5.4v7.8" stroke="#3a5f91" stroke-width="1.2"/></svg>
<span class="t mu" style="left:412px;top:202px;line-height:13px;height:13px;transform:translate(0.60px,0.18px)">/api/sipprot/denylist/232</span>
<span class="t c" style="left:690px;top:204px;line-height:12px;height:12px;transform:translate(0.00px,0.03px) scaleX(1.0450);color:#4c4c4c;">37</span>
<span class="t c" style="left:780px;top:204px;line-height:12px;height:12px;transform:translate(0.60px,0.03px) scaleX(1.0260);color:#4c4c4c;">Administrator</span>
<span class="t c" style="left:871px;top:204px;line-height:12px;height:12px;transform:translate(0.50px,0.03px) scaleX(0.9873);color:#4c4c4c;">Update Note</span>
<span class="t c" style="left:1052px;top:204px;line-height:12px;height:12px;transform:translate(0.75px,0.03px) scaleX(0.9014);color:#4c4c4c;">sipPROT</span>
<svg class="b" style="left:1147.30px;top:205.28px;" width="9.20" height="9.60" viewBox="0 0 16 16"><path d="M0.4 1.6h9.4v3.4H5.4v8H0.4z" fill="#3a5f91"/><rect x="2.6" y="0.9" width="5" height="1.6" fill="#9db1cd"/><path d="M6.4 5.6h4.8l3.6 3.4V15.2H6.4z" fill="#fff" stroke="#8aa2c4" stroke-width="1.2"/><path d="M11 5.8v3.4h3.6" fill="none" stroke="#8aa2c4" stroke-width="1.1"/><path d="M5.8 5.4v7.8" stroke="#3a5f91" stroke-width="1.2"/></svg>
<span class="t mk" style="left:1162px;top:203px;line-height:12px;height:12px;transform:translate(0.20px,0.78px)">594077e901a…</span>
<svg class="b" style="left:1245.30px;top:206.28px;" width="8.70" height="7.10" viewBox="0 0 8.7 7.1"><g fill="#3b6591"><rect x="0" y="0.05" width="1.5" height="1.2"/><rect x="2.6" y="0.05" width="6.1" height="1.2"/><rect x="0" y="2.00" width="1.5" height="1.2"/><rect x="2.6" y="2.00" width="6.1" height="1.2"/><rect x="0" y="3.95" width="1.5" height="1.2"/><rect x="2.6" y="3.95" width="6.1" height="1.2"/><rect x="0" y="5.90" width="1.5" height="1.2"/><rect x="2.6" y="5.90" width="6.1" height="1.2"/></g><rect x="2.6" y="0.6" width="6.1" height="6" fill="#3b6591" opacity="0.3"/></svg>

<svg class="b" style="left:185.05px;top:230.20px;" width="7.80" height="7.80" viewBox="0 0 16 16"><circle cx="8" cy="8" r="8" fill="#1c6a1c"/><path d="M4 8.500L6.900 11.400 12.600 5.600" fill="none" stroke="#fff" stroke-width="3.100"/></svg>
<span class="t c" style="left:203px;top:228px;line-height:12px;height:12px;transform:translate(0.75px,0.35px) scaleX(0.9742);color:#4c4c4c;">Dec 7, 2022 13:19:44</span>

<span class="t bg" style="left:331px;top:229px;line-height:9px;height:9px;transform:translate(0.70px,0.57px) scaleX(1.0676);color:#fff;">200</span>

<span class="t bg" style="left:353px;top:229px;line-height:9px;height:9px;transform:translate(0.75px,0.57px) scaleX(1.0259);color:#fff;">PUT</span>
<svg class="b" style="left:397.70px;top:229.60px;" width="9.20" height="9.60" viewBox="0 0 16 16"><path d="M0.4 1.6h9.4v3.4H5.4v8H0.4z" fill="#3a5f91"/><rect x="2.6" y="0.9" width="5" height="1.6" fill="#9db1cd"/><path d="M6.4 5.6h4.8l3.6 3.4V15.2H6.4z" fill="#fff" stroke="#8aa2c4" stroke-width="1.2"/><path d="M11 5.8v3.4h3.6" fill="none" stroke="#8aa2c4" stroke-width="1.1"/><path d="M5.8 5.4v7.8" stroke="#3a5f91" stroke-width="1.2"/></svg>
<span class="t mu" style="left:412px;top:226px;line-height:13px;height:13px;transform:translate(0.60px,0.50px)">/api/sipprot/denylist/232</span>
<span class="t c" style="left:690px;top:228px;line-height:12px;height:12px;transform:translate(0.00px,0.35px) scaleX(1.0450);color:#4c4c4c;">18</span>
<span class="t c" style="left:780px;top:228px;line-height:12px;height:12px;transform:translate(0.60px,0.35px) scaleX(1.0260);color:#4c4c4c;">Administrator</span>
<span class="t c" style="left:871px;top:228px;line-height:12px;height:12px;transform:translate(0.50px,0.35px) scaleX(0.9873);color:#4c4c4c;">Update Note</span>
<span class="t c" style="left:1052px;top:228px;line-height:12px;height:12px;transform:translate(0.75px,0.35px) scaleX(0.9014);color:#4c4c4c;">sipPROT</span>
<svg class="b" style="left:1147.30px;top:229.60px;" width="9.20" height="9.60" viewBox="0 0 16 16"><path d="M0.4 1.6h9.4v3.4H5.4v8H0.4z" fill="#3a5f91"/><rect x="2.6" y="0.9" width="5" height="1.6" fill="#9db1cd"/><path d="M6.4 5.6h4.8l3.6 3.4V15.2H6.4z" fill="#fff" stroke="#8aa2c4" stroke-width="1.2"/><path d="M11 5.8v3.4h3.6" fill="none" stroke="#8aa2c4" stroke-width="1.1"/><path d="M5.8 5.4v7.8" stroke="#3a5f91" stroke-width="1.2"/></svg>
<span class="t mk" style="left:1162px;top:228px;line-height:12px;height:12px;transform:translate(0.20px,0.10px)">a38f61488fb…</span>
<svg class="b" style="left:1245.30px;top:230.60px;" width="8.70" height="7.10" viewBox="0 0 8.7 7.1"><g fill="#3b6591"><rect x="0" y="0.05" width="1.5" height="1.2"/><rect x="2.6" y="0.05" width="6.1" height="1.2"/><rect x="0" y="2.00" width="1.5" height="1.2"/><rect x="2.6" y="2.00" width="6.1" height="1.2"/><rect x="0" y="3.95" width="1.5" height="1.2"/><rect x="2.6" y="3.95" width="6.1" height="1.2"/><rect x="0" y="5.90" width="1.5" height="1.2"/><rect x="2.6" y="5.90" width="6.1" height="1.2"/></g><rect x="2.6" y="0.6" width="6.1" height="6" fill="#3b6591" opacity="0.3"/></svg>

<svg class="b" style="left:185.05px;top:254.52px;" width="7.80" height="7.80" viewBox="0 0 16 16"><circle cx="8" cy="8" r="8" fill="#1c6a1c"/><path d="M4 8.500L6.900 11.400 12.600 5.600" fill="none" stroke="#fff" stroke-width="3.100"/></svg>
<span class="t c" style="left:203px;top:252px;line-height:12px;height:12px;transform:translate(0.75px,0.67px) scaleX(0.9742);color:#4c4c4c;">Dec 7, 2022 13:19:36</span>

<span class="t bg" style="left:331px;top:253px;line-height:9px;height:9px;transform:translate(0.70px,0.89px) scaleX(1.0499);color:#fff;">202</span>

<span class="t bg" style="left:353px;top:253px;line-height:9px;height:9px;transform:translate(0.75px,0.89px) scaleX(0.9902);color:#fff;">POST</span>
<svg class="b" style="left:397.70px;top:253.92px;" width="9.20" height="9.60" viewBox="0 0 16 16"><path d="M0.4 1.6h9.4v3.4H5.4v8H0.4z" fill="#3a5f91"/><rect x="2.6" y="0.9" width="5" height="1.6" fill="#9db1cd"/><path d="M6.4 5.6h4.8l3.6 3.4V15.2H6.4z" fill="#fff" stroke="#8aa2c4" stroke-width="1.2"/><path d="M11 5.8v3.4h3.6" fill="none" stroke="#8aa2c4" stroke-width="1.1"/><path d="M5.8 5.4v7.8" stroke="#3a5f91" stroke-width="1.2"/></svg>
<span class="t mu" style="left:412px;top:250px;line-height:13px;height:13px;transform:translate(0.60px,0.82px)">/api/sipprot/apply-rules</span>
<span class="t c" style="left:690px;top:252px;line-height:12px;height:12px;transform:translate(0.00px,0.67px) scaleX(1.0450);color:#a94442;">1015</span>
<span class="t c" style="left:780px;top:252px;line-height:12px;height:12px;transform:translate(0.60px,0.67px) scaleX(1.0260);color:#4c4c4c;">Administrator</span>
<span class="t c" style="left:871px;top:252px;line-height:12px;height:12px;transform:translate(0.50px,0.67px) scaleX(0.9580);color:#4c4c4c;">Apply Rules</span>
<span class="t c" style="left:1052px;top:252px;line-height:12px;height:12px;transform:translate(0.75px,0.67px) scaleX(0.9014);color:#4c4c4c;">sipPROT</span>
<svg class="b" style="left:1147.30px;top:253.92px;" width="9.20" height="9.60" viewBox="0 0 16 16"><path d="M0.4 1.6h9.4v3.4H5.4v8H0.4z" fill="#3a5f91"/><rect x="2.6" y="0.9" width="5" height="1.6" fill="#9db1cd"/><path d="M6.4 5.6h4.8l3.6 3.4V15.2H6.4z" fill="#fff" stroke="#8aa2c4" stroke-width="1.2"/><path d="M11 5.8v3.4h3.6" fill="none" stroke="#8aa2c4" stroke-width="1.1"/><path d="M5.8 5.4v7.8" stroke="#3a5f91" stroke-width="1.2"/></svg>
<span class="t mk" style="left:1162px;top:252px;line-height:12px;height:12px;transform:translate(0.20px,0.42px)">08eec910d6e…</span>
<svg class="b" style="left:1245.30px;top:254.92px;" width="8.70" height="7.10" viewBox="0 0 8.7 7.1"><g fill="#3b6591"><rect x="0" y="0.05" width="1.5" height="1.2"/><rect x="2.6" y="0.05" width="6.1" height="1.2"/><rect x="0" y="2.00" width="1.5" height="1.2"/><rect x="2.6" y="2.00" width="6.1" height="1.2"/><rect x="0" y="3.95" width="1.5" height="1.2"/><rect x="2.6" y="3.95" width="6.1" height="1.2"/><rect x="0" y="5.90" width="1.5" height="1.2"/><rect x="2.6" y="5.90" width="6.1" height="1.2"/></g><rect x="2.6" y="0.6" width="6.1" height="6" fill="#3b6591" opacity="0.3"/></svg>

<svg class="b" style="left:185.05px;top:278.84px;" width="7.80" height="7.80" viewBox="0 0 16 16"><circle cx="8" cy="8" r="8" fill="#1c6a1c"/><path d="M4 8.500L6.900 11.400 12.600 5.600" fill="none" stroke="#fff" stroke-width="3.100"/></svg>
<span class="t c" style="left:203px;top:276px;line-height:12px;height:12px;transform:translate(0.75px,0.99px) scaleX(0.9742);color:#4c4c4c;">Dec 7, 2022 13:19:36</span>

<span class="t bg" style="left:331px;top:278px;line-height:9px;height:9px;transform:translate(0.70px,0.21px) scaleX(1.0676);color:#fff;">200</span>

<span class="t bg" style="left:353px;top:278px;line-height:9px;height:9px;transform:translate(0.75px,0.21px) scaleX(0.9902);color:#fff;">POST</span>
<svg class="b" style="left:397.70px;top:278.24px;" width="9.20" height="9.60" viewBox="0 0 16 16"><path d="M0.4 1.6h9.4v3.4H5.4v8H0.4z" fill="#3a5f91"/><rect x="2.6" y="0.9" width="5" height="1.6" fill="#9db1cd"/><path d="M6.4 5.6h4.8l3.6 3.4V15.2H6.4z" fill="#fff" stroke="#8aa2c4" stroke-width="1.2"/><path d="M11 5.8v3.4h3.6" fill="none" stroke="#8aa2c4" stroke-width="1.1"/><path d="M5.8 5.4v7.8" stroke="#3a5f91" stroke-width="1.2"/></svg>
<span class="t mu" style="left:412px;top:275px;line-height:13px;height:13px;transform:translate(0.60px,0.14px)">/api/sipprot/denylist</span>
<span class="t c" style="left:690px;top:276px;line-height:12px;height:12px;transform:translate(0.00px,0.99px) scaleX(1.0450);color:#4c4c4c;">18</span>
<span class="t c" style="left:780px;top:276px;line-height:12px;height:12px;transform:translate(0.60px,0.99px) scaleX(1.0260);color:#4c4c4c;">Administrator</span>
<span class="t c" style="left:871px;top:276px;line-height:12px;height:12px;transform:translate(0.50px,0.99px) scaleX(0.9715);color:#4c4c4c;">Add To Denylist</span>
<span class="t c" style="left:1052px;top:276px;line-height:12px;height:12px;transform:translate(0.75px,0.99px) scaleX(0.9014);color:#4c4c4c;">sipPROT</span>
<svg class="b" style="left:1147.30px;top:278.24px;" width="9.20" height="9.60" viewBox="0 0 16 16"><path d="M0.4 1.6h9.4v3.4H5.4v8H0.4z" fill="#3a5f91"/><rect x="2.6" y="0.9" width="5" height="1.6" fill="#9db1cd"/><path d="M6.4 5.6h4.8l3.6 3.4V15.2H6.4z" fill="#fff" stroke="#8aa2c4" stroke-width="1.2"/><path d="M11 5.8v3.4h3.6" fill="none" stroke="#8aa2c4" stroke-width="1.1"/><path d="M5.8 5.4v7.8" stroke="#3a5f91" stroke-width="1.2"/></svg>
<span class="t mk" style="left:1162px;top:276px;line-height:12px;height:12px;transform:translate(0.20px,0.74px)">2c7430b5517…</span>
<svg class="b" style="left:1245.30px;top:279.24px;" width="8.70" height="7.10" viewBox="0 0 8.7 7.1"><g fill="#3b6591"><rect x="0" y="0.05" width="1.5" height="1.2"/><rect x="2.6" y="0.05" width="6.1" height="1.2"/><rect x="0" y="2.00" width="1.5" height="1.2"/><rect x="2.6" y="2.00" width="6.1" height="1.2"/><rect x="0" y="3.95" width="1.5" height="1.2"/><rect x="2.6" y="3.95" width="6.1" height="1.2"/><rect x="0" y="5.90" width="1.5" height="1.2"/><rect x="2.6" y="5.90" width="6.1" height="1.2"/></g><rect x="2.6" y="0.6" width="6.1" height="6" fill="#3b6591" opacity="0.3"/></svg>

<svg class="b" style="left:185.05px;top:303.16px;" width="7.80" height="7.80" viewBox="0 0 16 16"><circle cx="8" cy="8" r="8" fill="#1c6a1c"/><path d="M4 8.500L6.900 11.400 12.600 5.600" fill="none" stroke="#fff" stroke-width="3.100"/></svg>
<span class="t c" style="left:203px;top:301px;line-height:12px;height:12px;transform:translate(0.75px,0.31px) scaleX(0.9742);color:#4c4c4c;">Dec 7, 2022 13:19:31</span>

<span class="t bg" style="left:331px;top:302px;line-height:9px;height:9px;transform:translate(0.70px,0.53px) scaleX(1.0499);color:#fff;">202</span>

<span class="t bg" style="left:353px;top:302px;line-height:9px;height:9px;transform:translate(0.75px,0.53px) scaleX(0.9902);color:#fff;">POST</span>
<svg class="b" style="left:397.70px;top:302.56px;" width="9.20" height="9.60" viewBox="0 0 16 16"><path d="M0.4 1.6h9.4v3.4H5.4v8H0.4z" fill="#3a5f91"/><rect x="2.6" y="0.9" width="5" height="1.6" fill="#9db1cd"/><path d="M6.4 5.6h4.8l3.6 3.4V15.2H6.4z" fill="#fff" stroke="#8aa2c4" stroke-width="1.2"/><path d="M11 5.8v3.4h3.6" fill="none" stroke="#8aa2c4" stroke-width="1.1"/><path d="M5.8 5.4v7.8" stroke="#3a5f91" stroke-width="1.2"/></svg>
<span class="t mu" style="left:412px;top:299px;line-height:13px;height:13px;transform:translate(0.60px,0.46px)">/api/sipprot/apply-rules</span>
<span class="t c" style="left:690px;top:301px;line-height:12px;height:12px;transform:translate(0.00px,0.31px) scaleX(1.0450);color:#a94442;">1014</span>
<span class="t c" style="left:780px;top:301px;line-height:12px;height:12px;transform:translate(0.60px,0.31px) scaleX(1.0260);color:#4c4c4c;">Administrator</span>
<span class="t c" style="left:871px;top:301px;line-height:12px;height:12px;transform:translate(0.50px,0.31px) scaleX(0.9580);color:#4c4c4c;">Apply Rules</span>
<span class="t c" style="left:1052px;top:301px;line-height:12px;height:12px;transform:translate(0.75px,0.31px) scaleX(0.9014);color:#4c4c4c;">sipPROT</span>
<svg class="b" style="left:1147.30px;top:302.56px;" width="9.20" height="9.60" viewBox="0 0 16 16"><path d="M0.4 1.6h9.4v3.4H5.4v8H0.4z" fill="#3a5f91"/><rect x="2.6" y="0.9" width="5" height="1.6" fill="#9db1cd"/><path d="M6.4 5.6h4.8l3.6 3.4V15.2H6.4z" fill="#fff" stroke="#8aa2c4" stroke-width="1.2"/><path d="M11 5.8v3.4h3.6" fill="none" stroke="#8aa2c4" stroke-width="1.1"/><path d="M5.8 5.4v7.8" stroke="#3a5f91" stroke-width="1.2"/></svg>
<span class="t mk" style="left:1162px;top:301px;line-height:12px;height:12px;transform:translate(0.20px,0.06px)">fea13ad4037…</span>
<svg class="b" style="left:1245.30px;top:303.56px;" width="8.70" height="7.10" viewBox="0 0 8.7 7.1"><g fill="#3b6591"><rect x="0" y="0.05" width="1.5" height="1.2"/><rect x="2.6" y="0.05" width="6.1" height="1.2"/><rect x="0" y="2.00" width="1.5" height="1.2"/><rect x="2.6" y="2.00" width="6.1" height="1.2"/><rect x="0" y="3.95" width="1.5" height="1.2"/><rect x="2.6" y="3.95" width="6.1" height="1.2"/><rect x="0" y="5.90" width="1.5" height="1.2"/><rect x="2.6" y="5.90" width="6.1" height="1.2"/></g><rect x="2.6" y="0.6" width="6.1" height="6" fill="#3b6591" opacity="0.3"/></svg>

<svg class="b" style="left:185.05px;top:327.48px;" width="7.80" height="7.80" viewBox="0 0 16 16"><circle cx="8" cy="8" r="8" fill="#1c6a1c"/><path d="M4 8.500L6.900 11.400 12.600 5.600" fill="none" stroke="#fff" stroke-width="3.100"/></svg>
<span class="t c" style="left:203px;top:325px;line-height:12px;height:12px;transform:translate(0.75px,0.63px) scaleX(0.9742);color:#4c4c4c;">Dec 7, 2022 13:19:31</span>

<span class="t bg" style="left:331px;top:326px;line-height:9px;height:9px;transform:translate(0.70px,0.85px) scaleX(1.0676);color:#fff;">204</span>

<span class="t bg" style="left:353px;top:326px;line-height:9px;height:9px;transform:translate(0.75px,0.85px) scaleX(0.9394);color:#fff;">DELETE</span>
<svg class="b" style="left:397.70px;top:326.88px;" width="9.20" height="9.60" viewBox="0 0 16 16"><path d="M0.4 1.6h9.4v3.4H5.4v8H0.4z" fill="#3a5f91"/><rect x="2.6" y="0.9" width="5" height="1.6" fill="#9db1cd"/><path d="M6.4 5.6h4.8l3.6 3.4V15.2H6.4z" fill="#fff" stroke="#8aa2c4" stroke-width="1.2"/><path d="M11 5.8v3.4h3.6" fill="none" stroke="#8aa2c4" stroke-width="1.1"/><path d="M5.8 5.4v7.8" stroke="#3a5f91" stroke-width="1.2"/></svg>
<span class="t mu" style="left:412px;top:323px;line-height:13px;height:13px;transform:translate(0.60px,0.78px)">/api/sipprot/denylist</span>
<span class="t c" style="left:690px;top:325px;line-height:12px;height:12px;transform:translate(0.00px,0.63px) scaleX(1.0450);color:#4c4c4c;">26</span>
<span class="t c" style="left:780px;top:325px;line-height:12px;height:12px;transform:translate(0.60px,0.63px) scaleX(1.0260);color:#4c4c4c;">Administrator</span>
<span class="t c" style="left:871px;top:325px;line-height:12px;height:12px;transform:translate(0.50px,0.63px) scaleX(0.9835);color:#4c4c4c;">Remove Multiple From Denylist</span>
<span class="t c" style="left:1052px;top:325px;line-height:12px;height:12px;transform:translate(0.75px,0.63px) scaleX(0.9014);color:#4c4c4c;">sipPROT</span>
<svg class="b" style="left:1147.30px;top:326.88px;" width="9.20" height="9.60" viewBox="0 0 16 16"><path d="M0.4 1.6h9.4v3.4H5.4v8H0.4z" fill="#3a5f91"/><rect x="2.6" y="0.9" width="5" height="1.6" fill="#9db1cd"/><path d="M6.4 5.6h4.8l3.6 3.4V15.2H6.4z" fill="#fff" stroke="#8aa2c4" stroke-width="1.2"/><path d="M11 5.8v3.4h3.6" fill="none" stroke="#8aa2c4" stroke-width="1.1"/><path d="M5.8 5.4v7.8" stroke="#3a5f91" stroke-width="1.2"/></svg>
<span class="t mk" style="left:1162px;top:325px;line-height:12px;height:12px;transform:translate(0.20px,0.38px)">5f5bcb1b5cb…</span>
<svg class="b" style="left:1245.30px;top:327.88px;" width="8.70" height="7.10" viewBox="0 0 8.7 7.1"><g fill="#3b6591"><rect x="0" y="0.05" width="1.5" height="1.2"/><rect x="2.6" y="0.05" width="6.1" height="1.2"/><rect x="0" y="2.00" width="1.5" height="1.2"/><rect x="2.6" y="2.00" width="6.1" height="1.2"/><rect x="0" y="3.95" width="1.5" height="1.2"/><rect x="2.6" y="3.95" width="6.1" height="1.2"/><rect x="0" y="5.90" width="1.5" height="1.2"/><rect x="2.6" y="5.90" width="6.1" height="1.2"/></g><rect x="2.6" y="0.6" width="6.1" height="6" fill="#3b6591" opacity="0.3"/></svg>

<svg class="b" style="left:185.05px;top:351.80px;" width="7.80" height="7.80" viewBox="0 0 16 16"><circle cx="8" cy="8" r="8" fill="#1c6a1c"/><path d="M4 8.500L6.900 11.400 12.600 5.600" fill="none" stroke="#fff" stroke-width="3.100"/></svg>
<span class="t c" style="left:203px;top:349px;line-height:12px;height:12px;transform:translate(0.75px,0.95px) scaleX(0.9742);color:#4c4c4c;">Dec 7, 2022 13:19:18</span>

<span class="t bg" style="left:331px;top:351px;line-height:9px;height:9px;transform:translate(0.70px,0.17px) scaleX(1.0499);color:#fff;">202</span>

<span class="t bg" style="left:353px;top:351px;line-height:9px;height:9px;transform:translate(0.75px,0.17px) scaleX(0.9902);color:#fff;">POST</span>
<svg class="b" style="left:397.70px;top:351.20px;" width="9.20" height="9.60" viewBox="0 0 16 16"><path d="M0.4 1.6h9.4v3.4H5.4v8H0.4z" fill="#3a5f91"/><rect x="2.6" y="0.9" width="5" height="1.6" fill="#9db1cd"/><path d="M6.4 5.6h4.8l3.6 3.4V15.2H6.4z" fill="#fff" stroke="#8aa2c4" stroke-width="1.2"/><path d="M11 5.8v3.4h3.6" fill="none" stroke="#8aa2c4" stroke-width="1.1"/><path d="M5.8 5.4v7.8" stroke="#3a5f91" stroke-width="1.2"/></svg>
<span class="t mu" style="left:412px;top:348px;line-height:13px;height:13px;transform:translate(0.60px,0.10px)">/api/sipprot/apply-rules</span>
<span class="t c" style="left:690px;top:349px;line-height:12px;height:12px;transform:translate(0.00px,0.95px) scaleX(1.0450);color:#a94442;">1020</span>
<span class="t c" style="left:780px;top:349px;line-height:12px;height:12px;transform:translate(0.60px,0.95px) scaleX(1.0260);color:#4c4c4c;">Administrator</span>
<span class="t c" style="left:871px;top:349px;line-height:12px;height:12px;transform:translate(0.50px,0.95px) scaleX(0.9580);color:#4c4c4c;">Apply Rules</span>
<span class="t c" style="left:1052px;top:349px;line-height:12px;height:12px;transform:translate(0.75px,0.95px) scaleX(0.9014);color:#4c4c4c;">sipPROT</span>
<svg class="b" style="left:1147.30px;top:351.20px;" width="9.20" height="9.60" viewBox="0 0 16 16"><path d="M0.4 1.6h9.4v3.4H5.4v8H0.4z" fill="#3a5f91"/><rect x="2.6" y="0.9" width="5" height="1.6" fill="#9db1cd"/><path d="M6.4 5.6h4.8l3.6 3.4V15.2H6.4z" fill="#fff" stroke="#8aa2c4" stroke-width="1.2"/><path d="M11 5.8v3.4h3.6" fill="none" stroke="#8aa2c4" stroke-width="1.1"/><path d="M5.8 5.4v7.8" stroke="#3a5f91" stroke-width="1.2"/></svg>
<span class="t mk" style="left:1162px;top:349px;line-height:12px;height:12px;transform:translate(0.20px,0.70px)">aa55d92a03b…</span>
<svg class="b" style="left:1245.30px;top:352.20px;" width="8.70" height="7.10" viewBox="0 0 8.7 7.1"><g fill="#3b6591"><rect x="0" y="0.05" width="1.5" height="1.2"/><rect x="2.6" y="0.05" width="6.1" height="1.2"/><rect x="0" y="2.00" width="1.5" height="1.2"/><rect x="2.6" y="2.00" width="6.1" height="1.2"/><rect x="0" y="3.95" width="1.5" height="1.2"/><rect x="2.6" y="3.95" width="6.1" height="1.2"/><rect x="0" y="5.90" width="1.5" height="1.2"/><rect x="2.6" y="5.90" width="6.1" height="1.2"/></g><rect x="2.6" y="0.6" width="6.1" height="6" fill="#3b6591" opacity="0.3"/></svg>

<svg class="b" style="left:185.05px;top:376.12px;" width="7.80" height="7.80" viewBox="0 0 16 16"><circle cx="8" cy="8" r="8" fill="#1c6a1c"/><path d="M4 8.500L6.900 11.400 12.600 5.600" fill="none" stroke="#fff" stroke-width="3.100"/></svg>
<span class="t c" style="left:203px;top:374px;line-height:12px;height:12px;transform:translate(0.75px,0.27px) scaleX(0.9742);color:#4c4c4c;">Dec 7, 2022 13:19:18</span>

<span class="t bg" style="left:331px;top:375px;line-height:9px;height:9px;transform:translate(0.70px,0.49px) scaleX(1.0676);color:#fff;">204</span>

<span class="t bg" style="left:353px;top:375px;line-height:9px;height:9px;transform:translate(0.75px,0.49px) scaleX(0.9394);color:#fff;">DELETE</span>
<svg class="b" style="left:397.70px;top:375.52px;" width="9.20" height="9.60" viewBox="0 0 16 16"><path d="M0.4 1.6h9.4v3.4H5.4v8H0.4z" fill="#3a5f91"/><rect x="2.6" y="0.9" width="5" height="1.6" fill="#9db1cd"/><path d="M6.4 5.6h4.8l3.6 3.4V15.2H6.4z" fill="#fff" stroke="#8aa2c4" stroke-width="1.2"/><path d="M11 5.8v3.4h3.6" fill="none" stroke="#8aa2c4" stroke-width="1.1"/><path d="M5.8 5.4v7.8" stroke="#3a5f91" stroke-width="1.2"/></svg>
<span class="t mu" style="left:412px;top:372px;line-height:13px;height:13px;transform:translate(0.60px,0.42px)">/api/sipprot/denylist</span>
<span class="t c" style="left:690px;top:374px;line-height:12px;height:12px;transform:translate(0.00px,0.27px) scaleX(1.0450);color:#4c4c4c;">26</span>
<span class="t c" style="left:780px;top:374px;line-height:12px;height:12px;transform:translate(0.60px,0.27px) scaleX(1.0260);color:#4c4c4c;">Administrator</span>
<span class="t c" style="left:871px;top:374px;line-height:12px;height:12px;transform:translate(0.50px,0.27px) scaleX(0.9835);color:#4c4c4c;">Remove Multiple From Denylist</span>
<span class="t c" style="left:1052px;top:374px;line-height:12px;height:12px;transform:translate(0.75px,0.27px) scaleX(0.9014);color:#4c4c4c;">sipPROT</span>
<svg class="b" style="left:1147.30px;top:375.52px;" width="9.20" height="9.60" viewBox="0 0 16 16"><path d="M0.4 1.6h9.4v3.4H5.4v8H0.4z" fill="#3a5f91"/><rect x="2.6" y="0.9" width="5" height="1.6" fill="#9db1cd"/><path d="M6.4 5.6h4.8l3.6 3.4V15.2H6.4z" fill="#fff" stroke="#8aa2c4" stroke-width="1.2"/><path d="M11 5.8v3.4h3.6" fill="none" stroke="#8aa2c4" stroke-width="1.1"/><path d="M5.8 5.4v7.8" stroke="#3a5f91" stroke-width="1.2"/></svg>
<span class="t mk" style="left:1162px;top:374px;line-height:12px;height:12px;transform:translate(0.20px,0.02px)">88bd606e0ce…</span>
<svg class="b" style="left:1245.30px;top:376.52px;" width="8.70" height="7.10" viewBox="0 0 8.7 7.1"><g fill="#3b6591"><rect x="0" y="0.05" width="1.5" height="1.2"/><rect x="2.6" y="0.05" width="6.1" height="1.2"/><rect x="0" y="2.00" width="1.5" height="1.2"/><rect x="2.6" y="2.00" width="6.1" height="1.2"/><rect x="0" y="3.95" width="1.5" height="1.2"/><rect x="2.6" y="3.95" width="6.1" height="1.2"/><rect x="0" y="5.90" width="1.5" height="1.2"/><rect x="2.6" y="5.90" width="6.1" height="1.2"/></g><rect x="2.6" y="0.6" width="6.1" height="6" fill="#3b6591" opacity="0.3"/></svg>

<svg class="b" style="left:185.05px;top:400.44px;" width="7.80" height="7.80" viewBox="0 0 16 16"><circle cx="8" cy="8" r="8" fill="#1c6a1c"/><path d="M4 8.500L6.900 11.400 12.600 5.600" fill="none" stroke="#fff" stroke-width="3.100"/></svg>
<span class="t c" style="left:203px;top:398px;line-height:12px;height:12px;transform:translate(0.75px,0.59px) scaleX(0.9742);color:#4c4c4c;">Dec 7, 2022 13:19:02</span>

<span class="t bg" style="left:331px;top:399px;line-height:9px;height:9px;transform:translate(0.70px,0.81px) scaleX(1.0499);color:#fff;">202</span>

<span class="t bg" style="left:353px;top:399px;line-height:9px;height:9px;transform:translate(0.75px,0.81px) scaleX(0.9902);color:#fff;">POST</span>
<svg class="b" style="left:397.70px;top:399.84px;" width="9.20" height="9.60" viewBox="0 0 16 16"><path d="M0.4 1.6h9.4v3.4H5.4v8H0.4z" fill="#3a5f91"/><rect x="2.6" y="0.9" width="5" height="1.6" fill="#9db1cd"/><path d="M6.4 5.6h4.8l3.6 3.4V15.2H6.4z" fill="#fff" stroke="#8aa2c4" stroke-width="1.2"/><path d="M11 5.8v3.4h3.6" fill="none" stroke="#8aa2c4" stroke-width="1.1"/><path d="M5.8 5.4v7.8" stroke="#3a5f91" stroke-width="1.2"/></svg>
<span class="t mu" style="left:412px;top:396px;line-height:13px;height:13px;transform:translate(0.60px,0.74px)">/api/sipprot/apply-rules</span>
<span class="t c" style="left:690px;top:398px;line-height:12px;height:12px;transform:translate(0.00px,0.59px) scaleX(1.0450);color:#a94442;">1014</span>
<span class="t c" style="left:780px;top:398px;line-height:12px;height:12px;transform:translate(0.60px,0.59px) scaleX(1.0260);color:#4c4c4c;">Administrator</span>
<span class="t c" style="left:871px;top:398px;line-height:12px;height:12px;transform:translate(0.50px,0.59px) scaleX(0.9580);color:#4c4c4c;">Apply Rules</span>
<span class="t c" style="left:1052px;top:398px;line-height:12px;height:12px;transform:translate(0.75px,0.59px) scaleX(0.9014);color:#4c4c4c;">sipPROT</span>
<svg class="b" style="left:1147.30px;top:399.84px;" width="9.20" height="9.60" viewBox="0 0 16 16"><path d="M0.4 1.6h9.4v3.4H5.4v8H0.4z" fill="#3a5f91"/><rect x="2.6" y="0.9" width="5" height="1.6" fill="#9db1cd"/><path d="M6.4 5.6h4.8l3.6 3.4V15.2H6.4z" fill="#fff" stroke="#8aa2c4" stroke-width="1.2"/><path d="M11 5.8v3.4h3.6" fill="none" stroke="#8aa2c4" stroke-width="1.1"/><path d="M5.8 5.4v7.8" stroke="#3a5f91" stroke-width="1.2"/></svg>
<span class="t mk" style="left:1162px;top:398px;line-height:12px;height:12px;transform:translate(0.20px,0.34px)">c0089e503c3…</span>
<svg class="b" style="left:1245.30px;top:400.84px;" width="8.70" height="7.10" viewBox="0 0 8.7 7.1"><g fill="#3b6591"><rect x="0" y="0.05" width="1.5" height="1.2"/><rect x="2.6" y="0.05" width="6.1" height="1.2"/><rect x="0" y="2.00" width="1.5" height="1.2"/><rect x="2.6" y="2.00" width="6.1" height="1.2"/><rect x="0" y="3.95" width="1.5" height="1.2"/><rect x="2.6" y="3.95" width="6.1" height="1.2"/><rect x="0" y="5.90" width="1.5" height="1.2"/><rect x="2.6" y="5.90" width="6.1" height="1.2"/></g><rect x="2.6" y="0.6" width="6.1" height="6" fill="#3b6591" opacity="0.3"/></svg>

<svg class="b" style="left:185.05px;top:424.76px;" width="7.80" height="7.80" viewBox="0 0 16 16"><circle cx="8" cy="8" r="8" fill="#1c6a1c"/><path d="M4 8.500L6.900 11.400 12.600 5.600" fill="none" stroke="#fff" stroke-width="3.100"/></svg>
<span class="t c" style="left:203px;top:422px;line-height:12px;height:12px;transform:translate(0.75px,0.91px) scaleX(0.9742);color:#4c4c4c;">Dec 7, 2022 13:19:02</span>

<span class="t bg" style="left:331px;top:424px;line-height:9px;height:9px;transform:translate(0.70px,0.13px) scaleX(1.0676);color:#fff;">204</span>

<span class="t bg" style="left:353px;top:424px;line-height:9px;height:9px;transform:translate(0.75px,0.13px) scaleX(0.9394);color:#fff;">DELETE</span>
<svg class="b" style="left:397.70px;top:424.16px;" width="9.20" height="9.60" viewBox="0 0 16 16"><path d="M0.4 1.6h9.4v3.4H5.4v8H0.4z" fill="#3a5f91"/><rect x="2.6" y="0.9" width="5" height="1.6" fill="#9db1cd"/><path d="M6.4 5.6h4.8l3.6 3.4V15.2H6.4z" fill="#fff" stroke="#8aa2c4" stroke-width="1.2"/><path d="M11 5.8v3.4h3.6" fill="none" stroke="#8aa2c4" stroke-width="1.1"/><path d="M5.8 5.4v7.8" stroke="#3a5f91" stroke-width="1.2"/></svg>
<span class="t mu" style="left:412px;top:421px;line-height:13px;height:13px;transform:translate(0.60px,0.06px)">/api/sipprot/denylist/57</span>
<span class="t c" style="left:690px;top:422px;line-height:12px;height:12px;transform:translate(0.00px,0.91px) scaleX(1.0450);color:#4c4c4c;">15</span>
<span class="t c" style="left:780px;top:422px;line-height:12px;height:12px;transform:translate(0.60px,0.91px) scaleX(1.0260);color:#4c4c4c;">Administrator</span>
<span class="t c" style="left:871px;top:422px;line-height:12px;height:12px;transform:translate(0.50px,0.91px) scaleX(0.9602);color:#4c4c4c;">Remove From Denylist</span>
<span class="t c" style="left:1052px;top:422px;line-height:12px;height:12px;transform:translate(0.75px,0.91px) scaleX(0.9014);color:#4c4c4c;">sipPROT</span>
<svg class="b" style="left:1147.30px;top:424.16px;" width="9.20" height="9.60" viewBox="0 0 16 16"><path d="M0.4 1.6h9.4v3.4H5.4v8H0.4z" fill="#3a5f91"/><rect x="2.6" y="0.9" width="5" height="1.6" fill="#9db1cd"/><path d="M6.4 5.6h4.8l3.6 3.4V15.2H6.4z" fill="#fff" stroke="#8aa2c4" stroke-width="1.2"/><path d="M11 5.8v3.4h3.6" fill="none" stroke="#8aa2c4" stroke-width="1.1"/><path d="M5.8 5.4v7.8" stroke="#3a5f91" stroke-width="1.2"/></svg>
<span class="t mk" style="left:1162px;top:422px;line-height:12px;height:12px;transform:translate(0.20px,0.66px)">90c2e9b6f01…</span>
<svg class="b" style="left:1245.30px;top:425.16px;" width="8.70" height="7.10" viewBox="0 0 8.7 7.1"><g fill="#3b6591"><rect x="0" y="0.05" width="1.5" height="1.2"/><rect x="2.6" y="0.05" width="6.1" height="1.2"/><rect x="0" y="2.00" width="1.5" height="1.2"/><rect x="2.6" y="2.00" width="6.1" height="1.2"/><rect x="0" y="3.95" width="1.5" height="1.2"/><rect x="2.6" y="3.95" width="6.1" height="1.2"/><rect x="0" y="5.90" width="1.5" height="1.2"/><rect x="2.6" y="5.90" width="6.1" height="1.2"/></g><rect x="2.6" y="0.6" width="6.1" height="6" fill="#3b6591" opacity="0.3"/></svg>

<svg class="b" style="left:185.05px;top:449.08px;" width="7.80" height="7.80" viewBox="0 0 16 16"><circle cx="8" cy="8" r="8" fill="#1c6a1c"/><path d="M4 8.500L6.900 11.400 12.600 5.600" fill="none" stroke="#fff" stroke-width="3.100"/></svg>
<span class="t c" style="left:203px;top:447px;line-height:12px;height:12px;transform:translate(0.75px,0.23px) scaleX(0.9742);color:#4c4c4c;">Dec 7, 2022 13:13:16</span>

<span class="t bg" style="left:331px;top:448px;line-height:9px;height:9px;transform:translate(0.70px,0.45px) scaleX(1.0676);color:#fff;">200</span>

<span class="t bg" style="left:353px;top:448px;line-height:9px;height:9px;transform:translate(0.75px,0.45px) scaleX(1.0259);color:#fff;">PUT</span>
<svg class="b" style="left:397.70px;top:448.48px;" width="9.20" height="9.60" viewBox="0 0 16 16"><path d="M0.4 1.6h9.4v3.4H5.4v8H0.4z" fill="#3a5f91"/><rect x="2.6" y="0.9" width="5" height="1.6" fill="#9db1cd"/><path d="M6.4 5.6h4.8l3.6 3.4V15.2H6.4z" fill="#fff" stroke="#8aa2c4" stroke-width="1.2"/><path d="M11 5.8v3.4h3.6" fill="none" stroke="#8aa2c4" stroke-width="1.1"/><path d="M5.8 5.4v7.8" stroke="#3a5f91" stroke-width="1.2"/></svg>
<span class="t mu" style="left:412px;top:445px;line-height:13px;height:13px;transform:translate(0.60px,0.38px)">/api/sipprot/allowlist/219</span>
<span class="t c" style="left:690px;top:447px;line-height:12px;height:12px;transform:translate(0.00px,0.23px) scaleX(1.0450);color:#4c4c4c;">22</span>
<span class="t c" style="left:780px;top:447px;line-height:12px;height:12px;transform:translate(0.60px,0.23px) scaleX(1.0260);color:#4c4c4c;">Administrator</span>
<span class="t c" style="left:871px;top:447px;line-height:12px;height:12px;transform:translate(0.50px,0.23px) scaleX(0.9873);color:#4c4c4c;">Update Note</span>
<span class="t c" style="left:1052px;top:447px;line-height:12px;height:12px;transform:translate(0.75px,0.23px) scaleX(0.9014);color:#4c4c4c;">sipPROT</span>
<svg class="b" style="left:1147.30px;top:448.48px;" width="9.20" height="9.60" viewBox="0 0 16 16"><path d="M0.4 1.6h9.4v3.4H5.4v8H0.4z" fill="#3a5f91"/><rect x="2.6" y="0.9" width="5" height="1.6" fill="#9db1cd"/><path d="M6.4 5.6h4.8l3.6 3.4V15.2H6.4z" fill="#fff" stroke="#8aa2c4" stroke-width="1.2"/><path d="M11 5.8v3.4h3.6" fill="none" stroke="#8aa2c4" stroke-width="1.1"/><path d="M5.8 5.4v7.8" stroke="#3a5f91" stroke-width="1.2"/></svg>
<span class="t mk" style="left:1162px;top:446px;line-height:12px;height:12px;transform:translate(0.20px,0.98px)">70a5e3eaeec…</span>
<svg class="b" style="left:1245.30px;top:449.48px;" width="8.70" height="7.10" viewBox="0 0 8.7 7.1"><g fill="#3b6591"><rect x="0" y="0.05" width="1.5" height="1.2"/><rect x="2.6" y="0.05" width="6.1" height="1.2"/><rect x="0" y="2.00" width="1.5" height="1.2"/><rect x="2.6" y="2.00" width="6.1" height="1.2"/><rect x="0" y="3.95" width="1.5" height="1.2"/><rect x="2.6" y="3.95" width="6.1" height="1.2"/><rect x="0" y="5.90" width="1.5" height="1.2"/><rect x="2.6" y="5.90" width="6.1" height="1.2"/></g><rect x="2.6" y="0.6" width="6.1" height="6" fill="#3b6591" opacity="0.3"/></svg>

<svg class="b" style="left:185.05px;top:473.40px;" width="7.80" height="7.80" viewBox="0 0 16 16"><circle cx="8" cy="8" r="8" fill="#1c6a1c"/><path d="M4 8.500L6.900 11.400 12.600 5.600" fill="none" stroke="#fff" stroke-width="3.100"/></svg>
<span class="t c" style="left:203px;top:471px;line-height:12px;height:12px;transform:translate(0.75px,0.55px) scaleX(0.9742);color:#4c4c4c;">Dec 7, 2022 13:13:15</span>

<span class="t bg" style="left:331px;top:472px;line-height:9px;height:9px;transform:translate(0.70px,0.77px) scaleX(1.0676);color:#fff;">200</span>

<span class="t bg" style="left:353px;top:472px;line-height:9px;height:9px;transform:translate(0.75px,0.77px) scaleX(1.0259);color:#fff;">PUT</span>
<svg class="b" style="left:397.70px;top:472.80px;" width="9.20" height="9.60" viewBox="0 0 16 16"><path d="M0.4 1.6h9.4v3.4H5.4v8H0.4z" fill="#3a5f91"/><rect x="2.6" y="0.9" width="5" height="1.6" fill="#9db1cd"/><path d="M6.4 5.6h4.8l3.6 3.4V15.2H6.4z" fill="#fff" stroke="#8aa2c4" stroke-width="1.2"/><path d="M11 5.8v3.4h3.6" fill="none" stroke="#8aa2c4" stroke-width="1.1"/><path d="M5.8 5.4v7.8" stroke="#3a5f91" stroke-width="1.2"/></svg>
<span class="t mu" style="left:412px;top:469px;line-height:13px;height:13px;transform:translate(0.60px,0.70px)">/api/sipprot/allowlist/219</span>
<span class="t c" style="left:690px;top:471px;line-height:12px;height:12px;transform:translate(0.00px,0.55px) scaleX(1.0450);color:#4c4c4c;">13</span>
<span class="t c" style="left:780px;top:471px;line-height:12px;height:12px;transform:translate(0.60px,0.55px) scaleX(1.0260);color:#4c4c4c;">Administrator</span>
<span class="t c" style="left:871px;top:471px;line-height:12px;height:12px;transform:translate(0.50px,0.55px) scaleX(0.9873);color:#4c4c4c;">Update Note</span>
<span class="t c" style="left:1052px;top:471px;line-height:12px;height:12px;transform:translate(0.75px,0.55px) scaleX(0.9014);color:#4c4c4c;">sipPROT</span>
<svg class="b" style="left:1147.30px;top:472.80px;" width="9.20" height="9.60" viewBox="0 0 16 16"><path d="M0.4 1.6h9.4v3.4H5.4v8H0.4z" fill="#3a5f91"/><rect x="2.6" y="0.9" width="5" height="1.6" fill="#9db1cd"/><path d="M6.4 5.6h4.8l3.6 3.4V15.2H6.4z" fill="#fff" stroke="#8aa2c4" stroke-width="1.2"/><path d="M11 5.8v3.4h3.6" fill="none" stroke="#8aa2c4" stroke-width="1.1"/><path d="M5.8 5.4v7.8" stroke="#3a5f91" stroke-width="1.2"/></svg>
<span class="t mk" style="left:1162px;top:471px;line-height:12px;height:12px;transform:translate(0.20px,0.30px)">01d701dd3d3…</span>
<svg class="b" style="left:1245.30px;top:473.80px;" width="8.70" height="7.10" viewBox="0 0 8.7 7.1"><g fill="#3b6591"><rect x="0" y="0.05" width="1.5" height="1.2"/><rect x="2.6" y="0.05" width="6.1" height="1.2"/><rect x="0" y="2.00" width="1.5" height="1.2"/><rect x="2.6" y="2.00" width="6.1" height="1.2"/><rect x="0" y="3.95" width="1.5" height="1.2"/><rect x="2.6" y="3.95" width="6.1" height="1.2"/><rect x="0" y="5.90" width="1.5" height="1.2"/><rect x="2.6" y="5.90" width="6.1" height="1.2"/></g><rect x="2.6" y="0.6" width="6.1" height="6" fill="#3b6591" opacity="0.3"/></svg>

<svg class="b" style="left:185.05px;top:497.72px;" width="7.80" height="7.80" viewBox="0 0 16 16"><circle cx="8" cy="8" r="8" fill="#1c6a1c"/><path d="M4 8.500L6.900 11.400 12.600 5.600" fill="none" stroke="#fff" stroke-width="3.100"/></svg>
<span class="t c" style="left:203px;top:495px;line-height:12px;height:12px;transform:translate(0.75px,0.87px) scaleX(0.9742);color:#4c4c4c;">Dec 7, 2022 13:13:01</span>

<span class="t bg" style="left:331px;top:497px;line-height:9px;height:9px;transform:translate(0.70px,0.09px) scaleX(1.0676);color:#fff;">200</span>

<span class="t bg" style="left:353px;top:497px;line-height:9px;height:9px;transform:translate(0.75px,0.09px) scaleX(0.9902);color:#fff;">POST</span>
<svg class="b" style="left:397.70px;top:497.12px;" width="9.20" height="9.60" viewBox="0 0 16 16"><path d="M0.4 1.6h9.4v3.4H5.4v8H0.4z" fill="#3a5f91"/><rect x="2.6" y="0.9" width="5" height="1.6" fill="#9db1cd"/><path d="M6.4 5.6h4.8l3.6 3.4V15.2H6.4z" fill="#fff" stroke="#8aa2c4" stroke-width="1.2"/><path d="M11 5.8v3.4h3.6" fill="none" stroke="#8aa2c4" stroke-width="1.1"/><path d="M5.8 5.4v7.8" stroke="#3a5f91" stroke-width="1.2"/></svg>
<span class="t mu" style="left:412px;top:494px;line-height:13px;height:13px;transform:translate(0.60px,0.02px)">/api/login</span>
<span class="t c" style="left:690px;top:495px;line-height:12px;height:12px;transform:translate(0.00px,0.87px) scaleX(1.0450);color:#4c4c4c;">58</span>
<span class="t c" style="left:780px;top:495px;line-height:12px;height:12px;transform:translate(0.60px,0.87px) scaleX(1.0260);color:#4c4c4c;">Administrator</span>
<span class="t c" style="left:871px;top:495px;line-height:12px;height:12px;transform:translate(0.50px,0.87px) scaleX(0.9227);color:#4c4c4c;">Login</span>
<span class="t c" style="left:1052px;top:495px;line-height:12px;height:12px;transform:translate(0.75px,0.87px) scaleX(0.9055);color:#4c4c4c;">Session</span>
<svg class="b" style="left:1147.30px;top:497.12px;" width="9.20" height="9.60" viewBox="0 0 16 16"><path d="M0.4 1.6h9.4v3.4H5.4v8H0.4z" fill="#3a5f91"/><rect x="2.6" y="0.9" width="5" height="1.6" fill="#9db1cd"/><path d="M6.4 5.6h4.8l3.6 3.4V15.2H6.4z" fill="#fff" stroke="#8aa2c4" stroke-width="1.2"/><path d="M11 5.8v3.4h3.6" fill="none" stroke="#8aa2c4" stroke-width="1.1"/><path d="M5.8 5.4v7.8" stroke="#3a5f91" stroke-width="1.2"/></svg>
<span class="t mk" style="left:1162px;top:495px;line-height:12px;height:12px;transform:translate(0.20px,0.62px)">859dbd18377…</span>
<svg class="b" style="left:1245.30px;top:498.12px;" width="8.70" height="7.10" viewBox="0 0 8.7 7.1"><g fill="#3b6591"><rect x="0" y="0.05" width="1.5" height="1.2"/><rect x="2.6" y="0.05" width="6.1" height="1.2"/><rect x="0" y="2.00" width="1.5" height="1.2"/><rect x="2.6" y="2.00" width="6.1" height="1.2"/><rect x="0" y="3.95" width="1.5" height="1.2"/><rect x="2.6" y="3.95" width="6.1" height="1.2"/><rect x="0" y="5.90" width="1.5" height="1.2"/><rect x="2.6" y="5.90" width="6.1" height="1.2"/></g><rect x="2.6" y="0.6" width="6.1" height="6" fill="#3b6591" opacity="0.3"/></svg>

<svg class="b" style="left:185.05px;top:522.04px;" width="7.80" height="7.80" viewBox="0 0 16 16"><circle cx="8" cy="8" r="8" fill="#1c6a1c"/><path d="M4 8.500L6.900 11.400 12.600 5.600" fill="none" stroke="#fff" stroke-width="3.100"/></svg>
<span class="t c" style="left:203px;top:520px;line-height:12px;height:12px;transform:translate(0.75px,0.19px) scaleX(0.9742);color:#4c4c4c;">Dec 7, 2022 13:12:34</span>

<span class="t bg" style="left:331px;top:521px;line-height:9px;height:9px;transform:translate(0.70px,0.41px) scaleX(1.0499);color:#fff;">202</span>

<span class="t bg" style="left:353px;top:521px;line-height:9px;height:9px;transform:translate(0.75px,0.41px) scaleX(0.9902);color:#fff;">POST</span>
<svg class="b" style="left:397.70px;top:521.44px;" width="9.20" height="9.60" viewBox="0 0 16 16"><path d="M0.4 1.6h9.4v3.4H5.4v8H0.4z" fill="#3a5f91"/><rect x="2.6" y="0.9" width="5" height="1.6" fill="#9db1cd"/><path d="M6.4 5.6h4.8l3.6 3.4V15.2H6.4z" fill="#fff" stroke="#8aa2c4" stroke-width="1.2"/><path d="M11 5.8v3.4h3.6" fill="none" stroke="#8aa2c4" stroke-width="1.1"/><path d="M5.8 5.4v7.8" stroke="#3a5f91" stroke-width="1.2"/></svg>
<span class="t mu" style="left:412px;top:518px;line-height:13px;height:13px;transform:translate(0.60px,0.34px)">/api/sipprot/apply-rules</span>
<span class="t c" style="left:690px;top:520px;line-height:12px;height:12px;transform:translate(0.00px,0.19px) scaleX(1.0450);color:#a94442;">1015</span>
<span class="t c" style="left:780px;top:520px;line-height:12px;height:12px;transform:translate(0.60px,0.19px) scaleX(1.0260);color:#4c4c4c;">Administrator</span>
<span class="t c" style="left:871px;top:520px;line-height:12px;height:12px;transform:translate(0.50px,0.19px) scaleX(0.9580);color:#4c4c4c;">Apply Rules</span>
<span class="t c" style="left:1052px;top:520px;line-height:12px;height:12px;transform:translate(0.75px,0.19px) scaleX(0.9014);color:#4c4c4c;">sipPROT</span>
<svg class="b" style="left:1147.30px;top:521.44px;" width="9.20" height="9.60" viewBox="0 0 16 16"><path d="M0.4 1.6h9.4v3.4H5.4v8H0.4z" fill="#3a5f91"/><rect x="2.6" y="0.9" width="5" height="1.6" fill="#9db1cd"/><path d="M6.4 5.6h4.8l3.6 3.4V15.2H6.4z" fill="#fff" stroke="#8aa2c4" stroke-width="1.2"/><path d="M11 5.8v3.4h3.6" fill="none" stroke="#8aa2c4" stroke-width="1.1"/><path d="M5.8 5.4v7.8" stroke="#3a5f91" stroke-width="1.2"/></svg>
<span class="t mk" style="left:1162px;top:519px;line-height:12px;height:12px;transform:translate(0.20px,0.94px)">d1cbc1b4619…</span>
<svg class="b" style="left:1245.30px;top:522.44px;" width="8.70" height="7.10" viewBox="0 0 8.7 7.1"><g fill="#3b6591"><rect x="0" y="0.05" width="1.5" height="1.2"/><rect x="2.6" y="0.05" width="6.1" height="1.2"/><rect x="0" y="2.00" width="1.5" height="1.2"/><rect x="2.6" y="2.00" width="6.1" height="1.2"/><rect x="0" y="3.95" width="1.5" height="1.2"/><rect x="2.6" y="3.95" width="6.1" height="1.2"/><rect x="0" y="5.90" width="1.5" height="1.2"/><rect x="2.6" y="5.90" width="6.1" height="1.2"/></g><rect x="2.6" y="0.6" width="6.1" height="6" fill="#3b6591" opacity="0.3"/></svg>

<svg class="b" style="left:185.05px;top:546.36px;" width="7.80" height="7.80" viewBox="0 0 16 16"><circle cx="8" cy="8" r="8" fill="#1c6a1c"/><path d="M4 8.500L6.900 11.400 12.600 5.600" fill="none" stroke="#fff" stroke-width="3.100"/></svg>
<span class="t c" style="left:203px;top:544px;line-height:12px;height:12px;transform:translate(0.75px,0.51px) scaleX(0.9742);color:#4c4c4c;">Dec 7, 2022 13:12:34</span>

<span class="t bg" style="left:331px;top:545px;line-height:9px;height:9px;transform:translate(0.70px,0.73px) scaleX(1.0676);color:#fff;">200</span>

<span class="t bg" style="left:353px;top:545px;line-height:9px;height:9px;transform:translate(0.75px,0.73px) scaleX(0.9902);color:#fff;">POST</span>
<svg class="b" style="left:397.70px;top:545.76px;" width="9.20" height="9.60" viewBox="0 0 16 16"><path d="M0.4 1.6h9.4v3.4H5.4v8H0.4z" fill="#3a5f91"/><rect x="2.6" y="0.9" width="5" height="1.6" fill="#9db1cd"/><path d="M6.4 5.6h4.8l3.6 3.4V15.2H6.4z" fill="#fff" stroke="#8aa2c4" stroke-width="1.2"/><path d="M11 5.8v3.4h3.6" fill="none" stroke="#8aa2c4" stroke-width="1.1"/><path d="M5.8 5.4v7.8" stroke="#3a5f91" stroke-width="1.2"/></svg>
<span class="t mu" style="left:412px;top:542px;line-height:13px;height:13px;transform:translate(0.60px,0.66px)">/api/sipprot/allowlist</span>
<span class="t c" style="left:690px;top:544px;line-height:12px;height:12px;transform:translate(0.00px,0.51px) scaleX(1.0450);color:#4c4c4c;">19</span>
<span class="t c" style="left:780px;top:544px;line-height:12px;height:12px;transform:translate(0.60px,0.51px) scaleX(1.0260);color:#4c4c4c;">Administrator</span>
<span class="t c" style="left:871px;top:544px;line-height:12px;height:12px;transform:translate(0.50px,0.51px) scaleX(0.9871);color:#4c4c4c;">Add To Allowlist</span>
<span class="t c" style="left:1052px;top:544px;line-height:12px;height:12px;transform:translate(0.75px,0.51px) scaleX(0.9014);color:#4c4c4c;">sipPROT</span>
<svg class="b" style="left:1147.30px;top:545.76px;" width="9.20" height="9.60" viewBox="0 0 16 16"><path d="M0.4 1.6h9.4v3.4H5.4v8H0.4z" fill="#3a5f91"/><rect x="2.6" y="0.9" width="5" height="1.6" fill="#9db1cd"/><path d="M6.4 5.6h4.8l3.6 3.4V15.2H6.4z" fill="#fff" stroke="#8aa2c4" stroke-width="1.2"/><path d="M11 5.8v3.4h3.6" fill="none" stroke="#8aa2c4" stroke-width="1.1"/><path d="M5.8 5.4v7.8" stroke="#3a5f91" stroke-width="1.2"/></svg>
<span class="t mk" style="left:1162px;top:544px;line-height:12px;height:12px;transform:translate(0.20px,0.26px)">ab8e7c86413…</span>
<svg class="b" style="left:1245.30px;top:546.76px;" width="8.70" height="7.10" viewBox="0 0 8.7 7.1"><g fill="#3b6591"><rect x="0" y="0.05" width="1.5" height="1.2"/><rect x="2.6" y="0.05" width="6.1" height="1.2"/><rect x="0" y="2.00" width="1.5" height="1.2"/><rect x="2.6" y="2.00" width="6.1" height="1.2"/><rect x="0" y="3.95" width="1.5" height="1.2"/><rect x="2.6" y="3.95" width="6.1" height="1.2"/><rect x="0" y="5.90" width="1.5" height="1.2"/><rect x="2.6" y="5.90" width="6.1" height="1.2"/></g><rect x="2.6" y="0.6" width="6.1" height="6" fill="#3b6591" opacity="0.3"/></svg>

<svg class="b" style="left:185.05px;top:570.68px;" width="7.80" height="7.80" viewBox="0 0 16 16"><circle cx="8" cy="8" r="8" fill="#1c6a1c"/><path d="M4 8.500L6.900 11.400 12.600 5.600" fill="none" stroke="#fff" stroke-width="3.100"/></svg>
<span class="t c" style="left:203px;top:568px;line-height:12px;height:12px;transform:translate(0.75px,0.83px) scaleX(0.9742);color:#4c4c4c;">Dec 7, 2022 13:12:17</span>

<span class="t bg" style="left:331px;top:570px;line-height:9px;height:9px;transform:translate(0.70px,0.05px) scaleX(1.0676);color:#fff;">200</span>

<span class="t bg" style="left:353px;top:570px;line-height:9px;height:9px;transform:translate(0.75px,0.05px) scaleX(1.0259);color:#fff;">PUT</span>
<svg class="b" style="left:397.70px;top:570.08px;" width="9.20" height="9.60" viewBox="0 0 16 16"><path d="M0.4 1.6h9.4v3.4H5.4v8H0.4z" fill="#3a5f91"/><rect x="2.6" y="0.9" width="5" height="1.6" fill="#9db1cd"/><path d="M6.4 5.6h4.8l3.6 3.4V15.2H6.4z" fill="#fff" stroke="#8aa2c4" stroke-width="1.2"/><path d="M11 5.8v3.4h3.6" fill="none" stroke="#8aa2c4" stroke-width="1.1"/><path d="M5.8 5.4v7.8" stroke="#3a5f91" stroke-width="1.2"/></svg>
<span class="t mu" style="left:412px;top:566px;line-height:13px;height:13px;transform:translate(0.60px,0.98px)">/api/sipprot/denylist/57</span>
<span class="t c" style="left:690px;top:568px;line-height:12px;height:12px;transform:translate(0.00px,0.83px) scaleX(1.0450);color:#4c4c4c;">17</span>
<span class="t c" style="left:780px;top:568px;line-height:12px;height:12px;transform:translate(0.60px,0.83px) scaleX(1.0260);color:#4c4c4c;">Administrator</span>
<span class="t c" style="left:871px;top:568px;line-height:12px;height:12px;transform:translate(0.50px,0.83px) scaleX(0.9873);color:#4c4c4c;">Update Note</span>
<span class="t c" style="left:1052px;top:568px;line-height:12px;height:12px;transform:translate(0.75px,0.83px) scaleX(0.9014);color:#4c4c4c;">sipPROT</span>
<svg class="b" style="left:1147.30px;top:570.08px;" width="9.20" height="9.60" viewBox="0 0 16 16"><path d="M0.4 1.6h9.4v3.4H5.4v8H0.4z" fill="#3a5f91"/><rect x="2.6" y="0.9" width="5" height="1.6" fill="#9db1cd"/><path d="M6.4 5.6h4.8l3.6 3.4V15.2H6.4z" fill="#fff" stroke="#8aa2c4" stroke-width="1.2"/><path d="M11 5.8v3.4h3.6" fill="none" stroke="#8aa2c4" stroke-width="1.1"/><path d="M5.8 5.4v7.8" stroke="#3a5f91" stroke-width="1.2"/></svg>
<span class="t mk" style="left:1162px;top:568px;line-height:12px;height:12px;transform:translate(0.20px,0.58px)">e8118bc9703…</span>
<svg class="b" style="left:1245.30px;top:571.08px;" width="8.70" height="7.10" viewBox="0 0 8.7 7.1"><g fill="#3b6591"><rect x="0" y="0.05" width="1.5" height="1.2"/><rect x="2.6" y="0.05" width="6.1" height="1.2"/><rect x="0" y="2.00" width="1.5" height="1.2"/><rect x="2.6" y="2.00" width="6.1" height="1.2"/><rect x="0" y="3.95" width="1.5" height="1.2"/><rect x="2.6" y="3.95" width="6.1" height="1.2"/><rect x="0" y="5.90" width="1.5" height="1.2"/><rect x="2.6" y="5.90" width="6.1" height="1.2"/></g><rect x="2.6" y="0.6" width="6.1" height="6" fill="#3b6591" opacity="0.3"/></svg>



<span class="t s" style="left:672px;top:598px;line-height:12px;height:12px;transform:translate(0.90px,0.60px) scaleX(0.8870);color:#aaa;">Previous</span>
<span class="t sb" style="left:720px;top:598px;line-height:12px;height:12px;transform:translate(0.60px,0.60px) scaleX(0.9300);color:#fff;">1</span>
<span class="t s" style="left:740px;top:598px;line-height:12px;height:12px;transform:translate(0.60px,0.60px) scaleX(0.9300);color:#3d6294;">2</span>
<span class="t s" style="left:760px;top:598px;line-height:12px;height:12px;transform:translate(0.90px,0.60px) scaleX(0.8972);color:#3d6294;">Next</span>
<span class="t c" style="left:1232px;top:594px;line-height:12px;height:12px;transform:translate(0.75px,0.75px) scaleX(0.9514);color:#4f7396;">21 logs</span>
</div></body></html>
